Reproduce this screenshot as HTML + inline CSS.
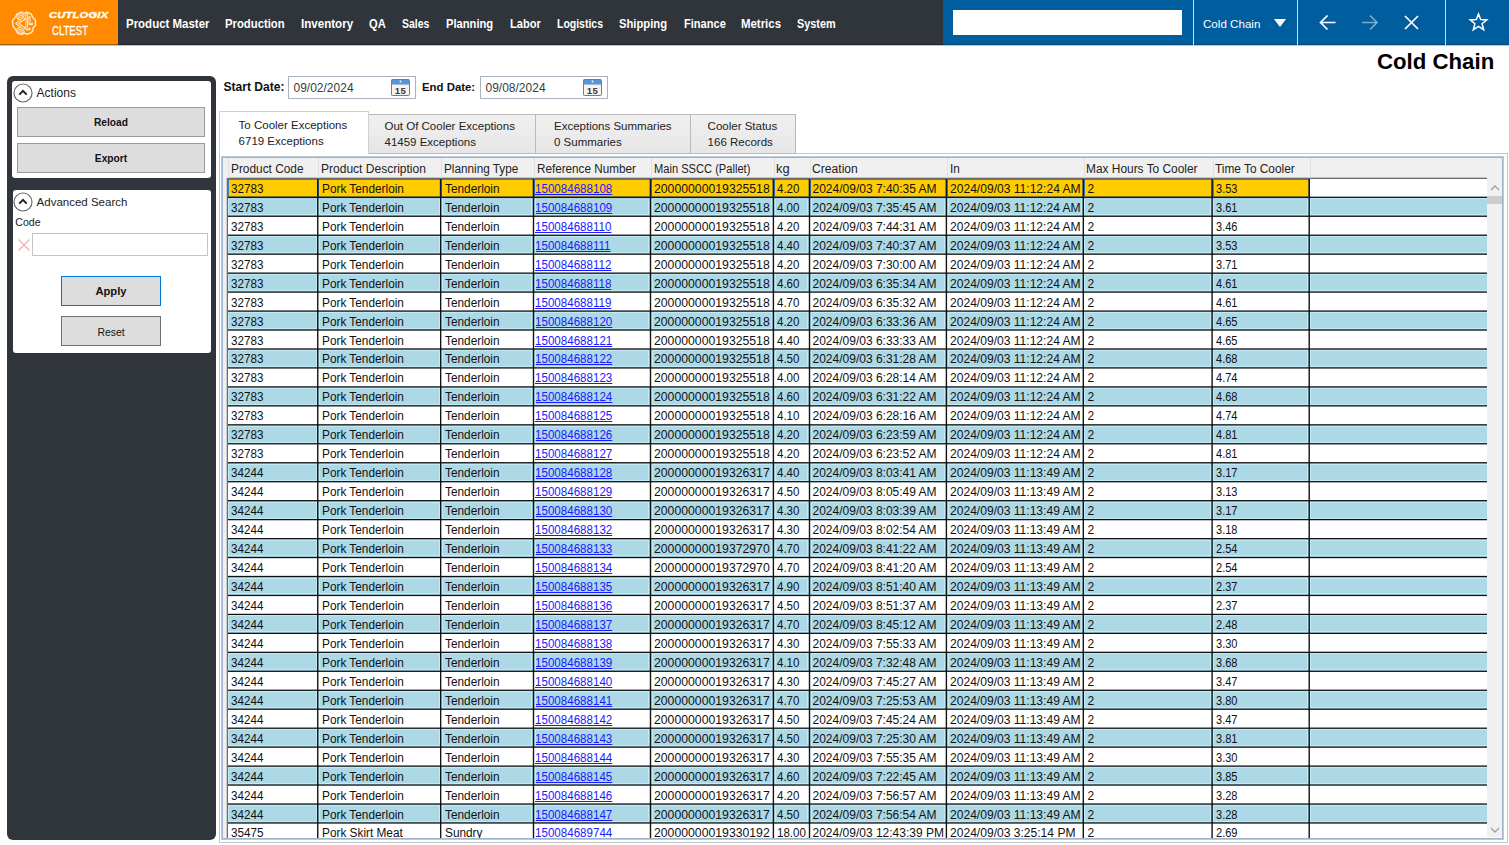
<!DOCTYPE html><html><head><meta charset="utf-8"><style>
html,body{margin:0;padding:0;}
body{width:1509px;height:845px;overflow:hidden;position:relative;background:#fff;font-family:"Liberation Sans", sans-serif;}
.a{position:absolute;box-sizing:border-box;}
.t{position:absolute;white-space:nowrap;line-height:1;font-family:"Liberation Sans", sans-serif;}
</style></head><body>
<div class="a" style="left:0;top:0;width:118px;height:45px;background:#ff8a00;border-bottom:1px solid #9a5a10"></div>
<div class="a" style="left:118px;top:0;width:825px;height:45px;background:#30353b;border-bottom:1px solid #1d242a"></div>
<div class="a" style="left:943px;top:0;width:566px;height:45px;background:#005e9f;border-bottom:1px solid #004a80"></div>
<div class="a" style="left:0;top:45px;width:1509px;height:1px;background:#b9c9d8"></div>
<svg class="a" style="left:11px;top:10px" width="26" height="26" viewBox="0 0 26 26" fill="none" stroke-linejoin="round" stroke-linecap="round">
<path d="M4.8 6.4 L5.8 4.2 L10.2 1.9 L13.1 3.1 L16 2.2 L20.4 4.2 L21.7 7.3 L24.3 9.9 L24.6 15.3 L22 17.9 L21.7 21.1 L18.8 23.6 L15.7 24.3 L13.4 23 L10.5 24.6 L6.4 23 L4.8 19.8 L1.9 16 L1.6 10.5 L3.2 8.6 Z" stroke="#ffe6c8" stroke-width="1.5"/>
<g stroke="#ffe6c8"><path d="M12.2 5.4 Q8.4 3.4 6.9 5.9 Q6.2 8.2 9 8.6 L12.8 9 L5.9 13.4 L12.8 17.8 L9 18.2 Q6.2 18.6 6.9 20.9 Q8.4 23.4 12.2 21.4" stroke-width="3.0"/><path d="M15.7 3 L15.7 19.2 L18.6 19" stroke-width="2.6"/><path d="M18.5 7.2 L18.5 14 L21 14" stroke-width="2.3"/></g>
<g stroke="#ff8a00"><path d="M12.2 5.4 Q8.4 3.4 6.9 5.9 Q6.2 8.2 9 8.6 L12.8 9 L5.9 13.4 L12.8 17.8 L9 18.2 Q6.2 18.6 6.9 20.9 Q8.4 23.4 12.2 21.4" stroke-width="0.9"/><path d="M15.7 4.2 L15.7 18.2 L17.8 18.1" stroke-width="0.7"/><path d="M18.5 8.2 L18.5 13 L20 13" stroke-width="0.6"/></g>
</svg>
<div class="t" style="left:48.6px;top:10.47px;font-size:9.6px;font-weight:700;color:#fff;transform:scaleX(1.16);transform-origin:0 0;font-style:italic;letter-spacing:0.2px;-webkit-text-stroke:0.35px #fff;">CUTLOGIX</div>
<div class="t" style="left:52.4px;top:24.53px;font-size:12.6px;font-weight:400;color:#fff;transform:scaleX(0.76);transform-origin:0 0;-webkit-text-stroke:0.3px #fff;">CLTEST</div>
<div class="t" style="left:125.5px;top:16.60px;font-size:13px;font-weight:700;color:#fff;transform:scaleX(0.8823);transform-origin:0 0;">Product Master</div>
<div class="t" style="left:225px;top:16.60px;font-size:13px;font-weight:700;color:#fff;transform:scaleX(0.8701);transform-origin:0 0;">Production</div>
<div class="t" style="left:300.9px;top:16.60px;font-size:13px;font-weight:700;color:#fff;transform:scaleX(0.8904);transform-origin:0 0;">Inventory</div>
<div class="t" style="left:369px;top:16.60px;font-size:13px;font-weight:700;color:#fff;transform:scaleX(0.8564);transform-origin:0 0;">QA</div>
<div class="t" style="left:402.2px;top:16.60px;font-size:13px;font-weight:700;color:#fff;transform:scaleX(0.8063);transform-origin:0 0;">Sales</div>
<div class="t" style="left:445.8px;top:16.60px;font-size:13px;font-weight:700;color:#fff;transform:scaleX(0.8599);transform-origin:0 0;">Planning</div>
<div class="t" style="left:509.5px;top:16.60px;font-size:13px;font-weight:700;color:#fff;transform:scaleX(0.8526);transform-origin:0 0;">Labor</div>
<div class="t" style="left:556.8px;top:16.60px;font-size:13px;font-weight:700;color:#fff;transform:scaleX(0.8059);transform-origin:0 0;">Logistics</div>
<div class="t" style="left:619.3px;top:16.60px;font-size:13px;font-weight:700;color:#fff;transform:scaleX(0.8650);transform-origin:0 0;">Shipping</div>
<div class="t" style="left:683.6px;top:16.60px;font-size:13px;font-weight:700;color:#fff;transform:scaleX(0.8509);transform-origin:0 0;">Finance</div>
<div class="t" style="left:741.2px;top:16.60px;font-size:13px;font-weight:700;color:#fff;transform:scaleX(0.8785);transform-origin:0 0;">Metrics</div>
<div class="t" style="left:797px;top:16.60px;font-size:13px;font-weight:700;color:#fff;transform:scaleX(0.8368);transform-origin:0 0;">System</div>
<div class="a" style="left:953px;top:10px;width:229px;height:25px;background:#fff"></div>
<div class="a" style="left:1193px;top:0;width:1px;height:45px;background:#c7dced"></div>
<div class="a" style="left:1297px;top:0;width:1px;height:45px;background:#c7dced"></div>
<div class="a" style="left:1445px;top:0;width:1px;height:45px;background:#c7dced"></div>
<div class="t" style="left:1203px;top:17.98px;font-size:11.6px;font-weight:400;color:#fff;">Cold Chain</div>
<svg class="a" style="left:1273px;top:18px" width="14" height="10" viewBox="0 0 14 10"><path d="M1 1 L13 1 L7 9 Z" fill="#fff"/></svg>
<svg class="a" style="left:1318px;top:13px" width="20" height="19" viewBox="0 0 20 19" fill="none" stroke="#fff" stroke-width="1.7">
<path d="M2.5 9.5 L17.5 9.5 M9.5 2.5 L2.5 9.5 L9.5 16.5"/></svg>
<svg class="a" style="left:1360px;top:13px" width="20" height="19" viewBox="0 0 20 19" fill="none" stroke="#7fa9cf" stroke-width="1.7">
<path d="M2 9.5 L17 9.5 M10 2.5 L17 9.5 L10 16.5"/></svg>
<svg class="a" style="left:1403px;top:14px" width="17" height="17" viewBox="0 0 17 17" fill="none" stroke="#fff" stroke-width="1.7">
<path d="M2 2 L15 15 M15 2 L2 15"/></svg>
<svg class="a" style="left:1468px;top:12px" width="21" height="20" viewBox="0 0 21 20" fill="none" stroke="#fff" stroke-width="1.5" stroke-linejoin="miter">
<path d="M10.5 2 L12.7 7.6 L18.8 7.9 L14.1 11.7 L15.7 17.7 L10.5 14.3 L5.3 17.7 L6.9 11.7 L2.2 7.9 L8.3 7.6 Z"/></svg>
<div class="t" style="left:1377.3px;top:50.58px;font-size:22px;font-weight:700;color:#000;transform:scaleX(1.0094);transform-origin:0 0;">Cold Chain</div>
<div class="a" style="left:7px;top:76px;width:209px;height:764px;background:#30353b;border-radius:6px"></div>
<div class="a" style="left:12px;top:81px;width:199px;height:97px;background:#fff;border-radius:3px"></div>
<div class="a" style="left:13px;top:190px;width:198px;height:163px;background:#fff;border-radius:3px"></div>
<svg class="a" style="left:13px;top:82.5px" width="20" height="20" viewBox="0 0 20 20" fill="none">
<circle cx="10" cy="10" r="9" stroke="#6b6b6b" stroke-width="1.2"/>
<path d="M6.3 11.6 L10 7.9 L13.7 11.6" stroke="#222" stroke-width="2"/></svg>
<div class="t" style="left:36.6px;top:87.34px;font-size:12px;font-weight:400;color:#222;">Actions</div>
<div class="a" style="left:17px;top:107px;width:188px;height:30px;background:#dddddd;border:1px solid #9a9a9a"></div>
<div class="t" style="left:17px;top:117.77px;width:188px;text-align:center;font-size:10.2px;font-weight:700;color:#111">Reload</div>
<div class="a" style="left:17px;top:143px;width:188px;height:30px;background:#dddddd;border:1px solid #9a9a9a"></div>
<div class="t" style="left:17px;top:153.57px;width:188px;text-align:center;font-size:10.2px;font-weight:700;color:#111">Export</div>
<svg class="a" style="left:13px;top:191.5px" width="20" height="20" viewBox="0 0 20 20" fill="none">
<circle cx="10" cy="10" r="9" stroke="#6b6b6b" stroke-width="1.2"/>
<path d="M6.3 11.6 L10 7.9 L13.7 11.6" stroke="#222" stroke-width="2"/></svg>
<div class="t" style="left:36.6px;top:196.87px;font-size:11.5px;font-weight:400;color:#222;">Advanced Search</div>
<div class="t" style="left:15.3px;top:217.23px;font-size:10.6px;font-weight:400;color:#222;">Code</div>
<svg class="a" style="left:17px;top:238px" width="14" height="14" viewBox="0 0 14 14" fill="none" stroke="#f4b0b0" stroke-width="1.3">
<path d="M1.5 1.5 L12.5 12.5 M12.5 1.5 L1.5 12.5"/></svg>
<div class="a" style="left:32px;top:233px;width:176px;height:23px;background:#fff;border:1px solid #c4c4c4"></div>
<div class="a" style="left:61px;top:276px;width:100px;height:30px;background:#dddddd;border:1px solid #0078d7"></div>
<div class="t" style="left:61px;top:286.22px;width:100px;text-align:center;font-size:11.2px;font-weight:700;color:#111">Apply</div>
<div class="a" style="left:61px;top:316px;width:100px;height:30px;background:#dddddd;border:1px solid #707070"></div>
<div class="t" style="left:61px;top:328.00px;width:100px;text-align:center;font-size:10.4px;font-weight:400;color:#111">Reset</div>
<div class="t" style="left:223.4px;top:81.16px;font-size:12.1px;font-weight:700;color:#111;">Start Date:</div>
<div class="t" style="left:422px;top:81.75px;font-size:11.4px;font-weight:700;color:#111;">End Date:</div>
<div class="a" style="left:288px;top:76px;width:128px;height:23px;background:#fff;border:1px solid #a9b3bd"></div>
<div class="t" style="left:293.5px;top:82.24px;font-size:12px;font-weight:400;color:#3a3a3a;">09/02/2024</div>
<svg class="a" style="left:391px;top:79px" width="19" height="17" viewBox="0 0 19 17">
<rect x="0.5" y="0.5" width="18" height="16" rx="0.8" fill="#f2f4f6" stroke="#7a7a7a"/>
<rect x="1" y="1" width="17" height="3.6" fill="#5095d8"/>
<rect x="1" y="4.6" width="17" height="0.8" fill="#4a5a6a"/>
<circle cx="9.5" cy="2.6" r="1" fill="#fff"/>
<text x="9.6" y="14.6" text-anchor="middle" font-family="Liberation Sans" font-size="9.6" font-weight="700" fill="#3c3c3c" letter-spacing="0.6">15</text></svg>
<div class="a" style="left:480px;top:76px;width:128px;height:23px;background:#fff;border:1px solid #a9b3bd"></div>
<div class="t" style="left:485.5px;top:82.24px;font-size:12px;font-weight:400;color:#3a3a3a;">09/08/2024</div>
<svg class="a" style="left:583px;top:79px" width="19" height="17" viewBox="0 0 19 17">
<rect x="0.5" y="0.5" width="18" height="16" rx="0.8" fill="#f2f4f6" stroke="#7a7a7a"/>
<rect x="1" y="1" width="17" height="3.6" fill="#5095d8"/>
<rect x="1" y="4.6" width="17" height="0.8" fill="#4a5a6a"/>
<circle cx="9.5" cy="2.6" r="1" fill="#fff"/>
<text x="9.6" y="14.6" text-anchor="middle" font-family="Liberation Sans" font-size="9.6" font-weight="700" fill="#3c3c3c" letter-spacing="0.6">15</text></svg>
<div class="a" style="left:219px;top:153px;width:1289px;height:690px;border:1px solid #c6c6c6;background:#fff"></div>
<div class="a" style="left:368px;top:114px;width:168px;height:40px;background:linear-gradient(#f0f0f0,#e6e6e6);border:1px solid #b9b9b9"></div>
<div class="t" style="left:384.5px;top:121.07px;font-size:11.5px;font-weight:400;color:#222;z-index:3;">Out Of Cooler Exceptions</div>
<div class="t" style="left:384.5px;top:137.07px;font-size:11.5px;font-weight:400;color:#222;z-index:3;">41459 Exceptions</div>
<div class="a" style="left:535px;top:114px;width:156px;height:40px;background:linear-gradient(#f0f0f0,#e6e6e6);border:1px solid #b9b9b9"></div>
<div class="t" style="left:554px;top:121.07px;font-size:11.5px;font-weight:400;color:#222;z-index:3;">Exceptions Summaries</div>
<div class="t" style="left:554px;top:137.07px;font-size:11.5px;font-weight:400;color:#222;z-index:3;">0 Summaries</div>
<div class="a" style="left:690px;top:114px;width:106px;height:40px;background:linear-gradient(#f0f0f0,#e6e6e6);border:1px solid #b9b9b9"></div>
<div class="t" style="left:707.6px;top:121.07px;font-size:11.5px;font-weight:400;color:#222;z-index:3;">Cooler Status</div>
<div class="t" style="left:707.6px;top:137.07px;font-size:11.5px;font-weight:400;color:#222;z-index:3;">166 Records</div>
<div class="a" style="left:219px;top:111px;width:150px;height:43px;background:#fff;border:1px solid #d0d0d0;border-bottom:none;z-index:2"></div>
<div class="t" style="left:238.6px;top:119.77px;font-size:11.5px;font-weight:400;color:#222;z-index:3;">To Cooler Exceptions</div>
<div class="t" style="left:238.6px;top:135.77px;font-size:11.5px;font-weight:400;color:#222;z-index:3;">6719 Exceptions</div>
<div class="a" style="left:221px;top:156px;width:1283px;height:684px;border:1px solid #b9cadb;box-shadow:inset 0 0 0 1px #9db4cc;background:#fff"></div>
<div class="a" style="left:223px;top:158px;width:1279px;height:21px;background:#f0f0f0"></div>
<div class="a" style="left:228px;top:177px;width:1259px;height:1px;background:rgba(0,0,0,0.18)"></div>
<div class="a" style="left:228px;top:178px;width:1259px;height:1px;background:#6c6c6c"></div>
<div class="a" style="left:228px;top:158px;width:1px;height:20px;background:#e0e0e0"></div>
<div class="a" style="left:318px;top:158px;width:1px;height:20px;background:#e0e0e0"></div>
<div class="a" style="left:441px;top:158px;width:1px;height:20px;background:#e0e0e0"></div>
<div class="a" style="left:534px;top:158px;width:1px;height:20px;background:#e0e0e0"></div>
<div class="a" style="left:651px;top:158px;width:1px;height:20px;background:#e0e0e0"></div>
<div class="a" style="left:774px;top:158px;width:1px;height:20px;background:#e0e0e0"></div>
<div class="a" style="left:810px;top:158px;width:1px;height:20px;background:#e0e0e0"></div>
<div class="a" style="left:947px;top:158px;width:1px;height:20px;background:#e0e0e0"></div>
<div class="a" style="left:1084px;top:158px;width:1px;height:20px;background:#e0e0e0"></div>
<div class="a" style="left:1213px;top:158px;width:1px;height:20px;background:#e0e0e0"></div>
<div class="a" style="left:1310px;top:158px;width:1px;height:20px;background:#e0e0e0"></div>
<div class="t" style="left:231.2px;top:162.74px;font-size:12px;font-weight:400;color:#222;transform:scaleX(0.9879);transform-origin:0 0;">Product Code</div>
<div class="t" style="left:321.2px;top:162.74px;font-size:12px;font-weight:400;color:#222;transform:scaleX(1.0017);transform-origin:0 0;">Product Description</div>
<div class="t" style="left:443.8px;top:162.74px;font-size:12px;font-weight:400;color:#222;transform:scaleX(0.9796);transform-origin:0 0;">Planning Type</div>
<div class="t" style="left:536.9000000000001px;top:162.74px;font-size:12px;font-weight:400;color:#222;transform:scaleX(0.9744);transform-origin:0 0;">Reference Number</div>
<div class="t" style="left:653.5px;top:162.74px;font-size:12px;font-weight:400;color:#222;transform:scaleX(0.9266);transform-origin:0 0;">Main SSCC (Pallet)</div>
<div class="t" style="left:776.4000000000001px;top:162.74px;font-size:12px;font-weight:400;color:#222;transform:scaleX(1.0719);transform-origin:0 0;">kg</div>
<div class="t" style="left:811.5px;top:162.74px;font-size:12px;font-weight:400;color:#222;transform:scaleX(1.0097);transform-origin:0 0;">Creation</div>
<div class="t" style="left:949.5px;top:162.74px;font-size:12px;font-weight:400;color:#222;transform:scaleX(0.9885);transform-origin:0 0;">In</div>
<div class="t" style="left:1086.1000000000001px;top:162.74px;font-size:12px;font-weight:400;color:#222;transform:scaleX(0.9920);transform-origin:0 0;">Max Hours To Cooler</div>
<div class="t" style="left:1215.1000000000001px;top:162.74px;font-size:12px;font-weight:400;color:#222;transform:scaleX(0.9876);transform-origin:0 0;">Time To Cooler</div>
<div class="a" style="left:223px;top:178px;width:4px;height:660px;background:#f0f0f0"></div>
<div class="a" style="left:228px;top:179px;width:1082px;height:18px;background:#ffcc00"></div>
<div class="a" style="left:1310px;top:179px;width:177px;height:18px;background:#ffffff"></div>
<div class="t" style="left:228px;top:179px;width:89px;height:19px;overflow:hidden"><div class="t" style="left:2.8px;top:3.84px;font-size:12px;color:#111;transform:scaleX(0.97);transform-origin:0 0;">32783</div></div>
<div class="t" style="left:318px;top:179px;width:122px;height:19px;overflow:hidden"><div class="t" style="left:3.5px;top:3.84px;font-size:12px;color:#111;transform:scaleX(0.985);transform-origin:0 0;">Pork Tenderloin</div></div>
<div class="t" style="left:441px;top:179px;width:92px;height:19px;overflow:hidden"><div class="t" style="left:3.5px;top:3.84px;font-size:12px;color:#111;transform:scaleX(0.985);transform-origin:0 0;">Tenderloin</div></div>
<div class="t" style="left:534px;top:179px;width:116px;height:19px;overflow:hidden"><div class="t" style="left:0.8px;top:3.84px;font-size:12px;color:#1a1aff;text-decoration:underline;transform:scaleX(0.965);transform-origin:0 0;">150084688108</div></div>
<div class="t" style="left:651px;top:179px;width:122px;height:19px;overflow:hidden"><div class="t" style="left:2.5px;top:3.84px;font-size:12px;color:#111;transform:scaleX(1.02);transform-origin:0 0;">20000000019325518</div></div>
<div class="t" style="left:774px;top:179px;width:35px;height:19px;overflow:hidden"><div class="t" style="left:2.5px;top:3.84px;font-size:12px;color:#111;transform:scaleX(0.96);transform-origin:0 0;">4.20</div></div>
<div class="t" style="left:810px;top:179px;width:136px;height:19px;overflow:hidden"><div class="t" style="left:2.5px;top:3.84px;font-size:12px;color:#111;">2024/09/03 7:40:35 AM</div></div>
<div class="t" style="left:947px;top:179px;width:136px;height:19px;overflow:hidden"><div class="t" style="left:2.5px;top:3.84px;font-size:12px;color:#111;transform:scaleX(1.006);transform-origin:0 0;">2024/09/03 11:12:24 AM</div></div>
<div class="t" style="left:1084px;top:179px;width:128px;height:19px;overflow:hidden"><div class="t" style="left:3.5px;top:3.84px;font-size:12px;color:#111;">2</div></div>
<div class="t" style="left:1213px;top:179px;width:96px;height:19px;overflow:hidden"><div class="t" style="left:2.5px;top:3.84px;font-size:12px;color:#111;transform:scaleX(0.92);transform-origin:0 0;">3.53</div></div>
<div class="a" style="left:228px;top:197px;width:1082px;height:19px;background:#add8e6"></div>
<div class="a" style="left:1310px;top:197px;width:177px;height:19px;background:#add8e6"></div>
<div class="t" style="left:228px;top:197px;width:89px;height:19px;overflow:hidden"><div class="t" style="left:2.8px;top:4.80px;font-size:12px;color:#111;transform:scaleX(0.97);transform-origin:0 0;">32783</div></div>
<div class="t" style="left:318px;top:197px;width:122px;height:19px;overflow:hidden"><div class="t" style="left:3.5px;top:4.80px;font-size:12px;color:#111;transform:scaleX(0.985);transform-origin:0 0;">Pork Tenderloin</div></div>
<div class="t" style="left:441px;top:197px;width:92px;height:19px;overflow:hidden"><div class="t" style="left:3.5px;top:4.80px;font-size:12px;color:#111;transform:scaleX(0.985);transform-origin:0 0;">Tenderloin</div></div>
<div class="t" style="left:534px;top:197px;width:116px;height:19px;overflow:hidden"><div class="t" style="left:0.8px;top:4.80px;font-size:12px;color:#1a1aff;text-decoration:underline;transform:scaleX(0.965);transform-origin:0 0;">150084688109</div></div>
<div class="t" style="left:651px;top:197px;width:122px;height:19px;overflow:hidden"><div class="t" style="left:2.5px;top:4.80px;font-size:12px;color:#111;transform:scaleX(1.02);transform-origin:0 0;">20000000019325518</div></div>
<div class="t" style="left:774px;top:197px;width:35px;height:19px;overflow:hidden"><div class="t" style="left:2.5px;top:4.80px;font-size:12px;color:#111;transform:scaleX(0.96);transform-origin:0 0;">4.00</div></div>
<div class="t" style="left:810px;top:197px;width:136px;height:19px;overflow:hidden"><div class="t" style="left:2.5px;top:4.80px;font-size:12px;color:#111;">2024/09/03 7:35:45 AM</div></div>
<div class="t" style="left:947px;top:197px;width:136px;height:19px;overflow:hidden"><div class="t" style="left:2.5px;top:4.80px;font-size:12px;color:#111;transform:scaleX(1.006);transform-origin:0 0;">2024/09/03 11:12:24 AM</div></div>
<div class="t" style="left:1084px;top:197px;width:128px;height:19px;overflow:hidden"><div class="t" style="left:3.5px;top:4.80px;font-size:12px;color:#111;">2</div></div>
<div class="t" style="left:1213px;top:197px;width:96px;height:19px;overflow:hidden"><div class="t" style="left:2.5px;top:4.80px;font-size:12px;color:#111;transform:scaleX(0.92);transform-origin:0 0;">3.61</div></div>
<div class="a" style="left:228px;top:216px;width:1082px;height:19px;background:#ffffff"></div>
<div class="a" style="left:1310px;top:216px;width:177px;height:19px;background:#ffffff"></div>
<div class="t" style="left:228px;top:216px;width:89px;height:19px;overflow:hidden"><div class="t" style="left:2.8px;top:4.76px;font-size:12px;color:#111;transform:scaleX(0.97);transform-origin:0 0;">32783</div></div>
<div class="t" style="left:318px;top:216px;width:122px;height:19px;overflow:hidden"><div class="t" style="left:3.5px;top:4.76px;font-size:12px;color:#111;transform:scaleX(0.985);transform-origin:0 0;">Pork Tenderloin</div></div>
<div class="t" style="left:441px;top:216px;width:92px;height:19px;overflow:hidden"><div class="t" style="left:3.5px;top:4.76px;font-size:12px;color:#111;transform:scaleX(0.985);transform-origin:0 0;">Tenderloin</div></div>
<div class="t" style="left:534px;top:216px;width:116px;height:19px;overflow:hidden"><div class="t" style="left:0.8px;top:4.76px;font-size:12px;color:#1a1aff;text-decoration:underline;transform:scaleX(0.965);transform-origin:0 0;">150084688110</div></div>
<div class="t" style="left:651px;top:216px;width:122px;height:19px;overflow:hidden"><div class="t" style="left:2.5px;top:4.76px;font-size:12px;color:#111;transform:scaleX(1.02);transform-origin:0 0;">20000000019325518</div></div>
<div class="t" style="left:774px;top:216px;width:35px;height:19px;overflow:hidden"><div class="t" style="left:2.5px;top:4.76px;font-size:12px;color:#111;transform:scaleX(0.96);transform-origin:0 0;">4.20</div></div>
<div class="t" style="left:810px;top:216px;width:136px;height:19px;overflow:hidden"><div class="t" style="left:2.5px;top:4.76px;font-size:12px;color:#111;">2024/09/03 7:44:31 AM</div></div>
<div class="t" style="left:947px;top:216px;width:136px;height:19px;overflow:hidden"><div class="t" style="left:2.5px;top:4.76px;font-size:12px;color:#111;transform:scaleX(1.006);transform-origin:0 0;">2024/09/03 11:12:24 AM</div></div>
<div class="t" style="left:1084px;top:216px;width:128px;height:19px;overflow:hidden"><div class="t" style="left:3.5px;top:4.76px;font-size:12px;color:#111;">2</div></div>
<div class="t" style="left:1213px;top:216px;width:96px;height:19px;overflow:hidden"><div class="t" style="left:2.5px;top:4.76px;font-size:12px;color:#111;transform:scaleX(0.92);transform-origin:0 0;">3.46</div></div>
<div class="a" style="left:228px;top:235px;width:1082px;height:19px;background:#add8e6"></div>
<div class="a" style="left:1310px;top:235px;width:177px;height:19px;background:#add8e6"></div>
<div class="t" style="left:228px;top:235px;width:89px;height:19px;overflow:hidden"><div class="t" style="left:2.8px;top:4.72px;font-size:12px;color:#111;transform:scaleX(0.97);transform-origin:0 0;">32783</div></div>
<div class="t" style="left:318px;top:235px;width:122px;height:19px;overflow:hidden"><div class="t" style="left:3.5px;top:4.72px;font-size:12px;color:#111;transform:scaleX(0.985);transform-origin:0 0;">Pork Tenderloin</div></div>
<div class="t" style="left:441px;top:235px;width:92px;height:19px;overflow:hidden"><div class="t" style="left:3.5px;top:4.72px;font-size:12px;color:#111;transform:scaleX(0.985);transform-origin:0 0;">Tenderloin</div></div>
<div class="t" style="left:534px;top:235px;width:116px;height:19px;overflow:hidden"><div class="t" style="left:0.8px;top:4.72px;font-size:12px;color:#1a1aff;text-decoration:underline;transform:scaleX(0.965);transform-origin:0 0;">150084688111</div></div>
<div class="t" style="left:651px;top:235px;width:122px;height:19px;overflow:hidden"><div class="t" style="left:2.5px;top:4.72px;font-size:12px;color:#111;transform:scaleX(1.02);transform-origin:0 0;">20000000019325518</div></div>
<div class="t" style="left:774px;top:235px;width:35px;height:19px;overflow:hidden"><div class="t" style="left:2.5px;top:4.72px;font-size:12px;color:#111;transform:scaleX(0.96);transform-origin:0 0;">4.40</div></div>
<div class="t" style="left:810px;top:235px;width:136px;height:19px;overflow:hidden"><div class="t" style="left:2.5px;top:4.72px;font-size:12px;color:#111;">2024/09/03 7:40:37 AM</div></div>
<div class="t" style="left:947px;top:235px;width:136px;height:19px;overflow:hidden"><div class="t" style="left:2.5px;top:4.72px;font-size:12px;color:#111;transform:scaleX(1.006);transform-origin:0 0;">2024/09/03 11:12:24 AM</div></div>
<div class="t" style="left:1084px;top:235px;width:128px;height:19px;overflow:hidden"><div class="t" style="left:3.5px;top:4.72px;font-size:12px;color:#111;">2</div></div>
<div class="t" style="left:1213px;top:235px;width:96px;height:19px;overflow:hidden"><div class="t" style="left:2.5px;top:4.72px;font-size:12px;color:#111;transform:scaleX(0.92);transform-origin:0 0;">3.53</div></div>
<div class="a" style="left:228px;top:254px;width:1082px;height:19px;background:#ffffff"></div>
<div class="a" style="left:1310px;top:254px;width:177px;height:19px;background:#ffffff"></div>
<div class="t" style="left:228px;top:254px;width:89px;height:19px;overflow:hidden"><div class="t" style="left:2.8px;top:4.68px;font-size:12px;color:#111;transform:scaleX(0.97);transform-origin:0 0;">32783</div></div>
<div class="t" style="left:318px;top:254px;width:122px;height:19px;overflow:hidden"><div class="t" style="left:3.5px;top:4.68px;font-size:12px;color:#111;transform:scaleX(0.985);transform-origin:0 0;">Pork Tenderloin</div></div>
<div class="t" style="left:441px;top:254px;width:92px;height:19px;overflow:hidden"><div class="t" style="left:3.5px;top:4.68px;font-size:12px;color:#111;transform:scaleX(0.985);transform-origin:0 0;">Tenderloin</div></div>
<div class="t" style="left:534px;top:254px;width:116px;height:19px;overflow:hidden"><div class="t" style="left:0.8px;top:4.68px;font-size:12px;color:#1a1aff;text-decoration:underline;transform:scaleX(0.965);transform-origin:0 0;">150084688112</div></div>
<div class="t" style="left:651px;top:254px;width:122px;height:19px;overflow:hidden"><div class="t" style="left:2.5px;top:4.68px;font-size:12px;color:#111;transform:scaleX(1.02);transform-origin:0 0;">20000000019325518</div></div>
<div class="t" style="left:774px;top:254px;width:35px;height:19px;overflow:hidden"><div class="t" style="left:2.5px;top:4.68px;font-size:12px;color:#111;transform:scaleX(0.96);transform-origin:0 0;">4.20</div></div>
<div class="t" style="left:810px;top:254px;width:136px;height:19px;overflow:hidden"><div class="t" style="left:2.5px;top:4.68px;font-size:12px;color:#111;">2024/09/03 7:30:00 AM</div></div>
<div class="t" style="left:947px;top:254px;width:136px;height:19px;overflow:hidden"><div class="t" style="left:2.5px;top:4.68px;font-size:12px;color:#111;transform:scaleX(1.006);transform-origin:0 0;">2024/09/03 11:12:24 AM</div></div>
<div class="t" style="left:1084px;top:254px;width:128px;height:19px;overflow:hidden"><div class="t" style="left:3.5px;top:4.68px;font-size:12px;color:#111;">2</div></div>
<div class="t" style="left:1213px;top:254px;width:96px;height:19px;overflow:hidden"><div class="t" style="left:2.5px;top:4.68px;font-size:12px;color:#111;transform:scaleX(0.92);transform-origin:0 0;">3.71</div></div>
<div class="a" style="left:228px;top:273px;width:1082px;height:19px;background:#add8e6"></div>
<div class="a" style="left:1310px;top:273px;width:177px;height:19px;background:#add8e6"></div>
<div class="t" style="left:228px;top:273px;width:89px;height:19px;overflow:hidden"><div class="t" style="left:2.8px;top:4.64px;font-size:12px;color:#111;transform:scaleX(0.97);transform-origin:0 0;">32783</div></div>
<div class="t" style="left:318px;top:273px;width:122px;height:19px;overflow:hidden"><div class="t" style="left:3.5px;top:4.64px;font-size:12px;color:#111;transform:scaleX(0.985);transform-origin:0 0;">Pork Tenderloin</div></div>
<div class="t" style="left:441px;top:273px;width:92px;height:19px;overflow:hidden"><div class="t" style="left:3.5px;top:4.64px;font-size:12px;color:#111;transform:scaleX(0.985);transform-origin:0 0;">Tenderloin</div></div>
<div class="t" style="left:534px;top:273px;width:116px;height:19px;overflow:hidden"><div class="t" style="left:0.8px;top:4.64px;font-size:12px;color:#1a1aff;text-decoration:underline;transform:scaleX(0.965);transform-origin:0 0;">150084688118</div></div>
<div class="t" style="left:651px;top:273px;width:122px;height:19px;overflow:hidden"><div class="t" style="left:2.5px;top:4.64px;font-size:12px;color:#111;transform:scaleX(1.02);transform-origin:0 0;">20000000019325518</div></div>
<div class="t" style="left:774px;top:273px;width:35px;height:19px;overflow:hidden"><div class="t" style="left:2.5px;top:4.64px;font-size:12px;color:#111;transform:scaleX(0.96);transform-origin:0 0;">4.60</div></div>
<div class="t" style="left:810px;top:273px;width:136px;height:19px;overflow:hidden"><div class="t" style="left:2.5px;top:4.64px;font-size:12px;color:#111;">2024/09/03 6:35:34 AM</div></div>
<div class="t" style="left:947px;top:273px;width:136px;height:19px;overflow:hidden"><div class="t" style="left:2.5px;top:4.64px;font-size:12px;color:#111;transform:scaleX(1.006);transform-origin:0 0;">2024/09/03 11:12:24 AM</div></div>
<div class="t" style="left:1084px;top:273px;width:128px;height:19px;overflow:hidden"><div class="t" style="left:3.5px;top:4.64px;font-size:12px;color:#111;">2</div></div>
<div class="t" style="left:1213px;top:273px;width:96px;height:19px;overflow:hidden"><div class="t" style="left:2.5px;top:4.64px;font-size:12px;color:#111;transform:scaleX(0.92);transform-origin:0 0;">4.61</div></div>
<div class="a" style="left:228px;top:292px;width:1082px;height:19px;background:#ffffff"></div>
<div class="a" style="left:1310px;top:292px;width:177px;height:19px;background:#ffffff"></div>
<div class="t" style="left:228px;top:292px;width:89px;height:19px;overflow:hidden"><div class="t" style="left:2.8px;top:4.60px;font-size:12px;color:#111;transform:scaleX(0.97);transform-origin:0 0;">32783</div></div>
<div class="t" style="left:318px;top:292px;width:122px;height:19px;overflow:hidden"><div class="t" style="left:3.5px;top:4.60px;font-size:12px;color:#111;transform:scaleX(0.985);transform-origin:0 0;">Pork Tenderloin</div></div>
<div class="t" style="left:441px;top:292px;width:92px;height:19px;overflow:hidden"><div class="t" style="left:3.5px;top:4.60px;font-size:12px;color:#111;transform:scaleX(0.985);transform-origin:0 0;">Tenderloin</div></div>
<div class="t" style="left:534px;top:292px;width:116px;height:19px;overflow:hidden"><div class="t" style="left:0.8px;top:4.60px;font-size:12px;color:#1a1aff;text-decoration:underline;transform:scaleX(0.965);transform-origin:0 0;">150084688119</div></div>
<div class="t" style="left:651px;top:292px;width:122px;height:19px;overflow:hidden"><div class="t" style="left:2.5px;top:4.60px;font-size:12px;color:#111;transform:scaleX(1.02);transform-origin:0 0;">20000000019325518</div></div>
<div class="t" style="left:774px;top:292px;width:35px;height:19px;overflow:hidden"><div class="t" style="left:2.5px;top:4.60px;font-size:12px;color:#111;transform:scaleX(0.96);transform-origin:0 0;">4.70</div></div>
<div class="t" style="left:810px;top:292px;width:136px;height:19px;overflow:hidden"><div class="t" style="left:2.5px;top:4.60px;font-size:12px;color:#111;">2024/09/03 6:35:32 AM</div></div>
<div class="t" style="left:947px;top:292px;width:136px;height:19px;overflow:hidden"><div class="t" style="left:2.5px;top:4.60px;font-size:12px;color:#111;transform:scaleX(1.006);transform-origin:0 0;">2024/09/03 11:12:24 AM</div></div>
<div class="t" style="left:1084px;top:292px;width:128px;height:19px;overflow:hidden"><div class="t" style="left:3.5px;top:4.60px;font-size:12px;color:#111;">2</div></div>
<div class="t" style="left:1213px;top:292px;width:96px;height:19px;overflow:hidden"><div class="t" style="left:2.5px;top:4.60px;font-size:12px;color:#111;transform:scaleX(0.92);transform-origin:0 0;">4.61</div></div>
<div class="a" style="left:228px;top:311px;width:1082px;height:19px;background:#add8e6"></div>
<div class="a" style="left:1310px;top:311px;width:177px;height:19px;background:#add8e6"></div>
<div class="t" style="left:228px;top:311px;width:89px;height:19px;overflow:hidden"><div class="t" style="left:2.8px;top:4.56px;font-size:12px;color:#111;transform:scaleX(0.97);transform-origin:0 0;">32783</div></div>
<div class="t" style="left:318px;top:311px;width:122px;height:19px;overflow:hidden"><div class="t" style="left:3.5px;top:4.56px;font-size:12px;color:#111;transform:scaleX(0.985);transform-origin:0 0;">Pork Tenderloin</div></div>
<div class="t" style="left:441px;top:311px;width:92px;height:19px;overflow:hidden"><div class="t" style="left:3.5px;top:4.56px;font-size:12px;color:#111;transform:scaleX(0.985);transform-origin:0 0;">Tenderloin</div></div>
<div class="t" style="left:534px;top:311px;width:116px;height:19px;overflow:hidden"><div class="t" style="left:0.8px;top:4.56px;font-size:12px;color:#1a1aff;text-decoration:underline;transform:scaleX(0.965);transform-origin:0 0;">150084688120</div></div>
<div class="t" style="left:651px;top:311px;width:122px;height:19px;overflow:hidden"><div class="t" style="left:2.5px;top:4.56px;font-size:12px;color:#111;transform:scaleX(1.02);transform-origin:0 0;">20000000019325518</div></div>
<div class="t" style="left:774px;top:311px;width:35px;height:19px;overflow:hidden"><div class="t" style="left:2.5px;top:4.56px;font-size:12px;color:#111;transform:scaleX(0.96);transform-origin:0 0;">4.20</div></div>
<div class="t" style="left:810px;top:311px;width:136px;height:19px;overflow:hidden"><div class="t" style="left:2.5px;top:4.56px;font-size:12px;color:#111;">2024/09/03 6:33:36 AM</div></div>
<div class="t" style="left:947px;top:311px;width:136px;height:19px;overflow:hidden"><div class="t" style="left:2.5px;top:4.56px;font-size:12px;color:#111;transform:scaleX(1.006);transform-origin:0 0;">2024/09/03 11:12:24 AM</div></div>
<div class="t" style="left:1084px;top:311px;width:128px;height:19px;overflow:hidden"><div class="t" style="left:3.5px;top:4.56px;font-size:12px;color:#111;">2</div></div>
<div class="t" style="left:1213px;top:311px;width:96px;height:19px;overflow:hidden"><div class="t" style="left:2.5px;top:4.56px;font-size:12px;color:#111;transform:scaleX(0.92);transform-origin:0 0;">4.65</div></div>
<div class="a" style="left:228px;top:330px;width:1082px;height:19px;background:#ffffff"></div>
<div class="a" style="left:1310px;top:330px;width:177px;height:19px;background:#ffffff"></div>
<div class="t" style="left:228px;top:330px;width:89px;height:19px;overflow:hidden"><div class="t" style="left:2.8px;top:4.52px;font-size:12px;color:#111;transform:scaleX(0.97);transform-origin:0 0;">32783</div></div>
<div class="t" style="left:318px;top:330px;width:122px;height:19px;overflow:hidden"><div class="t" style="left:3.5px;top:4.52px;font-size:12px;color:#111;transform:scaleX(0.985);transform-origin:0 0;">Pork Tenderloin</div></div>
<div class="t" style="left:441px;top:330px;width:92px;height:19px;overflow:hidden"><div class="t" style="left:3.5px;top:4.52px;font-size:12px;color:#111;transform:scaleX(0.985);transform-origin:0 0;">Tenderloin</div></div>
<div class="t" style="left:534px;top:330px;width:116px;height:19px;overflow:hidden"><div class="t" style="left:0.8px;top:4.52px;font-size:12px;color:#1a1aff;text-decoration:underline;transform:scaleX(0.965);transform-origin:0 0;">150084688121</div></div>
<div class="t" style="left:651px;top:330px;width:122px;height:19px;overflow:hidden"><div class="t" style="left:2.5px;top:4.52px;font-size:12px;color:#111;transform:scaleX(1.02);transform-origin:0 0;">20000000019325518</div></div>
<div class="t" style="left:774px;top:330px;width:35px;height:19px;overflow:hidden"><div class="t" style="left:2.5px;top:4.52px;font-size:12px;color:#111;transform:scaleX(0.96);transform-origin:0 0;">4.40</div></div>
<div class="t" style="left:810px;top:330px;width:136px;height:19px;overflow:hidden"><div class="t" style="left:2.5px;top:4.52px;font-size:12px;color:#111;">2024/09/03 6:33:33 AM</div></div>
<div class="t" style="left:947px;top:330px;width:136px;height:19px;overflow:hidden"><div class="t" style="left:2.5px;top:4.52px;font-size:12px;color:#111;transform:scaleX(1.006);transform-origin:0 0;">2024/09/03 11:12:24 AM</div></div>
<div class="t" style="left:1084px;top:330px;width:128px;height:19px;overflow:hidden"><div class="t" style="left:3.5px;top:4.52px;font-size:12px;color:#111;">2</div></div>
<div class="t" style="left:1213px;top:330px;width:96px;height:19px;overflow:hidden"><div class="t" style="left:2.5px;top:4.52px;font-size:12px;color:#111;transform:scaleX(0.92);transform-origin:0 0;">4.65</div></div>
<div class="a" style="left:228px;top:349px;width:1082px;height:19px;background:#add8e6"></div>
<div class="a" style="left:1310px;top:349px;width:177px;height:19px;background:#add8e6"></div>
<div class="t" style="left:228px;top:349px;width:89px;height:19px;overflow:hidden"><div class="t" style="left:2.8px;top:4.48px;font-size:12px;color:#111;transform:scaleX(0.97);transform-origin:0 0;">32783</div></div>
<div class="t" style="left:318px;top:349px;width:122px;height:19px;overflow:hidden"><div class="t" style="left:3.5px;top:4.48px;font-size:12px;color:#111;transform:scaleX(0.985);transform-origin:0 0;">Pork Tenderloin</div></div>
<div class="t" style="left:441px;top:349px;width:92px;height:19px;overflow:hidden"><div class="t" style="left:3.5px;top:4.48px;font-size:12px;color:#111;transform:scaleX(0.985);transform-origin:0 0;">Tenderloin</div></div>
<div class="t" style="left:534px;top:349px;width:116px;height:19px;overflow:hidden"><div class="t" style="left:0.8px;top:4.48px;font-size:12px;color:#1a1aff;text-decoration:underline;transform:scaleX(0.965);transform-origin:0 0;">150084688122</div></div>
<div class="t" style="left:651px;top:349px;width:122px;height:19px;overflow:hidden"><div class="t" style="left:2.5px;top:4.48px;font-size:12px;color:#111;transform:scaleX(1.02);transform-origin:0 0;">20000000019325518</div></div>
<div class="t" style="left:774px;top:349px;width:35px;height:19px;overflow:hidden"><div class="t" style="left:2.5px;top:4.48px;font-size:12px;color:#111;transform:scaleX(0.96);transform-origin:0 0;">4.50</div></div>
<div class="t" style="left:810px;top:349px;width:136px;height:19px;overflow:hidden"><div class="t" style="left:2.5px;top:4.48px;font-size:12px;color:#111;">2024/09/03 6:31:28 AM</div></div>
<div class="t" style="left:947px;top:349px;width:136px;height:19px;overflow:hidden"><div class="t" style="left:2.5px;top:4.48px;font-size:12px;color:#111;transform:scaleX(1.006);transform-origin:0 0;">2024/09/03 11:12:24 AM</div></div>
<div class="t" style="left:1084px;top:349px;width:128px;height:19px;overflow:hidden"><div class="t" style="left:3.5px;top:4.48px;font-size:12px;color:#111;">2</div></div>
<div class="t" style="left:1213px;top:349px;width:96px;height:19px;overflow:hidden"><div class="t" style="left:2.5px;top:4.48px;font-size:12px;color:#111;transform:scaleX(0.92);transform-origin:0 0;">4.68</div></div>
<div class="a" style="left:228px;top:368px;width:1082px;height:19px;background:#ffffff"></div>
<div class="a" style="left:1310px;top:368px;width:177px;height:19px;background:#ffffff"></div>
<div class="t" style="left:228px;top:368px;width:89px;height:19px;overflow:hidden"><div class="t" style="left:2.8px;top:4.44px;font-size:12px;color:#111;transform:scaleX(0.97);transform-origin:0 0;">32783</div></div>
<div class="t" style="left:318px;top:368px;width:122px;height:19px;overflow:hidden"><div class="t" style="left:3.5px;top:4.44px;font-size:12px;color:#111;transform:scaleX(0.985);transform-origin:0 0;">Pork Tenderloin</div></div>
<div class="t" style="left:441px;top:368px;width:92px;height:19px;overflow:hidden"><div class="t" style="left:3.5px;top:4.44px;font-size:12px;color:#111;transform:scaleX(0.985);transform-origin:0 0;">Tenderloin</div></div>
<div class="t" style="left:534px;top:368px;width:116px;height:19px;overflow:hidden"><div class="t" style="left:0.8px;top:4.44px;font-size:12px;color:#1a1aff;text-decoration:underline;transform:scaleX(0.965);transform-origin:0 0;">150084688123</div></div>
<div class="t" style="left:651px;top:368px;width:122px;height:19px;overflow:hidden"><div class="t" style="left:2.5px;top:4.44px;font-size:12px;color:#111;transform:scaleX(1.02);transform-origin:0 0;">20000000019325518</div></div>
<div class="t" style="left:774px;top:368px;width:35px;height:19px;overflow:hidden"><div class="t" style="left:2.5px;top:4.44px;font-size:12px;color:#111;transform:scaleX(0.96);transform-origin:0 0;">4.00</div></div>
<div class="t" style="left:810px;top:368px;width:136px;height:19px;overflow:hidden"><div class="t" style="left:2.5px;top:4.44px;font-size:12px;color:#111;">2024/09/03 6:28:14 AM</div></div>
<div class="t" style="left:947px;top:368px;width:136px;height:19px;overflow:hidden"><div class="t" style="left:2.5px;top:4.44px;font-size:12px;color:#111;transform:scaleX(1.006);transform-origin:0 0;">2024/09/03 11:12:24 AM</div></div>
<div class="t" style="left:1084px;top:368px;width:128px;height:19px;overflow:hidden"><div class="t" style="left:3.5px;top:4.44px;font-size:12px;color:#111;">2</div></div>
<div class="t" style="left:1213px;top:368px;width:96px;height:19px;overflow:hidden"><div class="t" style="left:2.5px;top:4.44px;font-size:12px;color:#111;transform:scaleX(0.92);transform-origin:0 0;">4.74</div></div>
<div class="a" style="left:228px;top:387px;width:1082px;height:19px;background:#add8e6"></div>
<div class="a" style="left:1310px;top:387px;width:177px;height:19px;background:#add8e6"></div>
<div class="t" style="left:228px;top:387px;width:89px;height:19px;overflow:hidden"><div class="t" style="left:2.8px;top:4.40px;font-size:12px;color:#111;transform:scaleX(0.97);transform-origin:0 0;">32783</div></div>
<div class="t" style="left:318px;top:387px;width:122px;height:19px;overflow:hidden"><div class="t" style="left:3.5px;top:4.40px;font-size:12px;color:#111;transform:scaleX(0.985);transform-origin:0 0;">Pork Tenderloin</div></div>
<div class="t" style="left:441px;top:387px;width:92px;height:19px;overflow:hidden"><div class="t" style="left:3.5px;top:4.40px;font-size:12px;color:#111;transform:scaleX(0.985);transform-origin:0 0;">Tenderloin</div></div>
<div class="t" style="left:534px;top:387px;width:116px;height:19px;overflow:hidden"><div class="t" style="left:0.8px;top:4.40px;font-size:12px;color:#1a1aff;text-decoration:underline;transform:scaleX(0.965);transform-origin:0 0;">150084688124</div></div>
<div class="t" style="left:651px;top:387px;width:122px;height:19px;overflow:hidden"><div class="t" style="left:2.5px;top:4.40px;font-size:12px;color:#111;transform:scaleX(1.02);transform-origin:0 0;">20000000019325518</div></div>
<div class="t" style="left:774px;top:387px;width:35px;height:19px;overflow:hidden"><div class="t" style="left:2.5px;top:4.40px;font-size:12px;color:#111;transform:scaleX(0.96);transform-origin:0 0;">4.60</div></div>
<div class="t" style="left:810px;top:387px;width:136px;height:19px;overflow:hidden"><div class="t" style="left:2.5px;top:4.40px;font-size:12px;color:#111;">2024/09/03 6:31:22 AM</div></div>
<div class="t" style="left:947px;top:387px;width:136px;height:19px;overflow:hidden"><div class="t" style="left:2.5px;top:4.40px;font-size:12px;color:#111;transform:scaleX(1.006);transform-origin:0 0;">2024/09/03 11:12:24 AM</div></div>
<div class="t" style="left:1084px;top:387px;width:128px;height:19px;overflow:hidden"><div class="t" style="left:3.5px;top:4.40px;font-size:12px;color:#111;">2</div></div>
<div class="t" style="left:1213px;top:387px;width:96px;height:19px;overflow:hidden"><div class="t" style="left:2.5px;top:4.40px;font-size:12px;color:#111;transform:scaleX(0.92);transform-origin:0 0;">4.68</div></div>
<div class="a" style="left:228px;top:406px;width:1082px;height:19px;background:#ffffff"></div>
<div class="a" style="left:1310px;top:406px;width:177px;height:19px;background:#ffffff"></div>
<div class="t" style="left:228px;top:406px;width:89px;height:19px;overflow:hidden"><div class="t" style="left:2.8px;top:4.36px;font-size:12px;color:#111;transform:scaleX(0.97);transform-origin:0 0;">32783</div></div>
<div class="t" style="left:318px;top:406px;width:122px;height:19px;overflow:hidden"><div class="t" style="left:3.5px;top:4.36px;font-size:12px;color:#111;transform:scaleX(0.985);transform-origin:0 0;">Pork Tenderloin</div></div>
<div class="t" style="left:441px;top:406px;width:92px;height:19px;overflow:hidden"><div class="t" style="left:3.5px;top:4.36px;font-size:12px;color:#111;transform:scaleX(0.985);transform-origin:0 0;">Tenderloin</div></div>
<div class="t" style="left:534px;top:406px;width:116px;height:19px;overflow:hidden"><div class="t" style="left:0.8px;top:4.36px;font-size:12px;color:#1a1aff;text-decoration:underline;transform:scaleX(0.965);transform-origin:0 0;">150084688125</div></div>
<div class="t" style="left:651px;top:406px;width:122px;height:19px;overflow:hidden"><div class="t" style="left:2.5px;top:4.36px;font-size:12px;color:#111;transform:scaleX(1.02);transform-origin:0 0;">20000000019325518</div></div>
<div class="t" style="left:774px;top:406px;width:35px;height:19px;overflow:hidden"><div class="t" style="left:2.5px;top:4.36px;font-size:12px;color:#111;transform:scaleX(0.96);transform-origin:0 0;">4.10</div></div>
<div class="t" style="left:810px;top:406px;width:136px;height:19px;overflow:hidden"><div class="t" style="left:2.5px;top:4.36px;font-size:12px;color:#111;">2024/09/03 6:28:16 AM</div></div>
<div class="t" style="left:947px;top:406px;width:136px;height:19px;overflow:hidden"><div class="t" style="left:2.5px;top:4.36px;font-size:12px;color:#111;transform:scaleX(1.006);transform-origin:0 0;">2024/09/03 11:12:24 AM</div></div>
<div class="t" style="left:1084px;top:406px;width:128px;height:19px;overflow:hidden"><div class="t" style="left:3.5px;top:4.36px;font-size:12px;color:#111;">2</div></div>
<div class="t" style="left:1213px;top:406px;width:96px;height:19px;overflow:hidden"><div class="t" style="left:2.5px;top:4.36px;font-size:12px;color:#111;transform:scaleX(0.92);transform-origin:0 0;">4.74</div></div>
<div class="a" style="left:228px;top:425px;width:1082px;height:19px;background:#add8e6"></div>
<div class="a" style="left:1310px;top:425px;width:177px;height:19px;background:#add8e6"></div>
<div class="t" style="left:228px;top:425px;width:89px;height:19px;overflow:hidden"><div class="t" style="left:2.8px;top:4.32px;font-size:12px;color:#111;transform:scaleX(0.97);transform-origin:0 0;">32783</div></div>
<div class="t" style="left:318px;top:425px;width:122px;height:19px;overflow:hidden"><div class="t" style="left:3.5px;top:4.32px;font-size:12px;color:#111;transform:scaleX(0.985);transform-origin:0 0;">Pork Tenderloin</div></div>
<div class="t" style="left:441px;top:425px;width:92px;height:19px;overflow:hidden"><div class="t" style="left:3.5px;top:4.32px;font-size:12px;color:#111;transform:scaleX(0.985);transform-origin:0 0;">Tenderloin</div></div>
<div class="t" style="left:534px;top:425px;width:116px;height:19px;overflow:hidden"><div class="t" style="left:0.8px;top:4.32px;font-size:12px;color:#1a1aff;text-decoration:underline;transform:scaleX(0.965);transform-origin:0 0;">150084688126</div></div>
<div class="t" style="left:651px;top:425px;width:122px;height:19px;overflow:hidden"><div class="t" style="left:2.5px;top:4.32px;font-size:12px;color:#111;transform:scaleX(1.02);transform-origin:0 0;">20000000019325518</div></div>
<div class="t" style="left:774px;top:425px;width:35px;height:19px;overflow:hidden"><div class="t" style="left:2.5px;top:4.32px;font-size:12px;color:#111;transform:scaleX(0.96);transform-origin:0 0;">4.20</div></div>
<div class="t" style="left:810px;top:425px;width:136px;height:19px;overflow:hidden"><div class="t" style="left:2.5px;top:4.32px;font-size:12px;color:#111;">2024/09/03 6:23:59 AM</div></div>
<div class="t" style="left:947px;top:425px;width:136px;height:19px;overflow:hidden"><div class="t" style="left:2.5px;top:4.32px;font-size:12px;color:#111;transform:scaleX(1.006);transform-origin:0 0;">2024/09/03 11:12:24 AM</div></div>
<div class="t" style="left:1084px;top:425px;width:128px;height:19px;overflow:hidden"><div class="t" style="left:3.5px;top:4.32px;font-size:12px;color:#111;">2</div></div>
<div class="t" style="left:1213px;top:425px;width:96px;height:19px;overflow:hidden"><div class="t" style="left:2.5px;top:4.32px;font-size:12px;color:#111;transform:scaleX(0.92);transform-origin:0 0;">4.81</div></div>
<div class="a" style="left:228px;top:444px;width:1082px;height:19px;background:#ffffff"></div>
<div class="a" style="left:1310px;top:444px;width:177px;height:19px;background:#ffffff"></div>
<div class="t" style="left:228px;top:444px;width:89px;height:19px;overflow:hidden"><div class="t" style="left:2.8px;top:4.28px;font-size:12px;color:#111;transform:scaleX(0.97);transform-origin:0 0;">32783</div></div>
<div class="t" style="left:318px;top:444px;width:122px;height:19px;overflow:hidden"><div class="t" style="left:3.5px;top:4.28px;font-size:12px;color:#111;transform:scaleX(0.985);transform-origin:0 0;">Pork Tenderloin</div></div>
<div class="t" style="left:441px;top:444px;width:92px;height:19px;overflow:hidden"><div class="t" style="left:3.5px;top:4.28px;font-size:12px;color:#111;transform:scaleX(0.985);transform-origin:0 0;">Tenderloin</div></div>
<div class="t" style="left:534px;top:444px;width:116px;height:19px;overflow:hidden"><div class="t" style="left:0.8px;top:4.28px;font-size:12px;color:#1a1aff;text-decoration:underline;transform:scaleX(0.965);transform-origin:0 0;">150084688127</div></div>
<div class="t" style="left:651px;top:444px;width:122px;height:19px;overflow:hidden"><div class="t" style="left:2.5px;top:4.28px;font-size:12px;color:#111;transform:scaleX(1.02);transform-origin:0 0;">20000000019325518</div></div>
<div class="t" style="left:774px;top:444px;width:35px;height:19px;overflow:hidden"><div class="t" style="left:2.5px;top:4.28px;font-size:12px;color:#111;transform:scaleX(0.96);transform-origin:0 0;">4.20</div></div>
<div class="t" style="left:810px;top:444px;width:136px;height:19px;overflow:hidden"><div class="t" style="left:2.5px;top:4.28px;font-size:12px;color:#111;">2024/09/03 6:23:52 AM</div></div>
<div class="t" style="left:947px;top:444px;width:136px;height:19px;overflow:hidden"><div class="t" style="left:2.5px;top:4.28px;font-size:12px;color:#111;transform:scaleX(1.006);transform-origin:0 0;">2024/09/03 11:12:24 AM</div></div>
<div class="t" style="left:1084px;top:444px;width:128px;height:19px;overflow:hidden"><div class="t" style="left:3.5px;top:4.28px;font-size:12px;color:#111;">2</div></div>
<div class="t" style="left:1213px;top:444px;width:96px;height:19px;overflow:hidden"><div class="t" style="left:2.5px;top:4.28px;font-size:12px;color:#111;transform:scaleX(0.92);transform-origin:0 0;">4.81</div></div>
<div class="a" style="left:228px;top:463px;width:1082px;height:19px;background:#add8e6"></div>
<div class="a" style="left:1310px;top:463px;width:177px;height:19px;background:#add8e6"></div>
<div class="t" style="left:228px;top:463px;width:89px;height:19px;overflow:hidden"><div class="t" style="left:2.8px;top:4.24px;font-size:12px;color:#111;transform:scaleX(0.97);transform-origin:0 0;">34244</div></div>
<div class="t" style="left:318px;top:463px;width:122px;height:19px;overflow:hidden"><div class="t" style="left:3.5px;top:4.24px;font-size:12px;color:#111;transform:scaleX(0.985);transform-origin:0 0;">Pork Tenderloin</div></div>
<div class="t" style="left:441px;top:463px;width:92px;height:19px;overflow:hidden"><div class="t" style="left:3.5px;top:4.24px;font-size:12px;color:#111;transform:scaleX(0.985);transform-origin:0 0;">Tenderloin</div></div>
<div class="t" style="left:534px;top:463px;width:116px;height:19px;overflow:hidden"><div class="t" style="left:0.8px;top:4.24px;font-size:12px;color:#1a1aff;text-decoration:underline;transform:scaleX(0.965);transform-origin:0 0;">150084688128</div></div>
<div class="t" style="left:651px;top:463px;width:122px;height:19px;overflow:hidden"><div class="t" style="left:2.5px;top:4.24px;font-size:12px;color:#111;transform:scaleX(1.02);transform-origin:0 0;">20000000019326317</div></div>
<div class="t" style="left:774px;top:463px;width:35px;height:19px;overflow:hidden"><div class="t" style="left:2.5px;top:4.24px;font-size:12px;color:#111;transform:scaleX(0.96);transform-origin:0 0;">4.40</div></div>
<div class="t" style="left:810px;top:463px;width:136px;height:19px;overflow:hidden"><div class="t" style="left:2.5px;top:4.24px;font-size:12px;color:#111;">2024/09/03 8:03:41 AM</div></div>
<div class="t" style="left:947px;top:463px;width:136px;height:19px;overflow:hidden"><div class="t" style="left:2.5px;top:4.24px;font-size:12px;color:#111;transform:scaleX(1.006);transform-origin:0 0;">2024/09/03 11:13:49 AM</div></div>
<div class="t" style="left:1084px;top:463px;width:128px;height:19px;overflow:hidden"><div class="t" style="left:3.5px;top:4.24px;font-size:12px;color:#111;">2</div></div>
<div class="t" style="left:1213px;top:463px;width:96px;height:19px;overflow:hidden"><div class="t" style="left:2.5px;top:4.24px;font-size:12px;color:#111;transform:scaleX(0.92);transform-origin:0 0;">3.17</div></div>
<div class="a" style="left:228px;top:482px;width:1082px;height:19px;background:#ffffff"></div>
<div class="a" style="left:1310px;top:482px;width:177px;height:19px;background:#ffffff"></div>
<div class="t" style="left:228px;top:482px;width:89px;height:19px;overflow:hidden"><div class="t" style="left:2.8px;top:4.20px;font-size:12px;color:#111;transform:scaleX(0.97);transform-origin:0 0;">34244</div></div>
<div class="t" style="left:318px;top:482px;width:122px;height:19px;overflow:hidden"><div class="t" style="left:3.5px;top:4.20px;font-size:12px;color:#111;transform:scaleX(0.985);transform-origin:0 0;">Pork Tenderloin</div></div>
<div class="t" style="left:441px;top:482px;width:92px;height:19px;overflow:hidden"><div class="t" style="left:3.5px;top:4.20px;font-size:12px;color:#111;transform:scaleX(0.985);transform-origin:0 0;">Tenderloin</div></div>
<div class="t" style="left:534px;top:482px;width:116px;height:19px;overflow:hidden"><div class="t" style="left:0.8px;top:4.20px;font-size:12px;color:#1a1aff;text-decoration:underline;transform:scaleX(0.965);transform-origin:0 0;">150084688129</div></div>
<div class="t" style="left:651px;top:482px;width:122px;height:19px;overflow:hidden"><div class="t" style="left:2.5px;top:4.20px;font-size:12px;color:#111;transform:scaleX(1.02);transform-origin:0 0;">20000000019326317</div></div>
<div class="t" style="left:774px;top:482px;width:35px;height:19px;overflow:hidden"><div class="t" style="left:2.5px;top:4.20px;font-size:12px;color:#111;transform:scaleX(0.96);transform-origin:0 0;">4.50</div></div>
<div class="t" style="left:810px;top:482px;width:136px;height:19px;overflow:hidden"><div class="t" style="left:2.5px;top:4.20px;font-size:12px;color:#111;">2024/09/03 8:05:49 AM</div></div>
<div class="t" style="left:947px;top:482px;width:136px;height:19px;overflow:hidden"><div class="t" style="left:2.5px;top:4.20px;font-size:12px;color:#111;transform:scaleX(1.006);transform-origin:0 0;">2024/09/03 11:13:49 AM</div></div>
<div class="t" style="left:1084px;top:482px;width:128px;height:19px;overflow:hidden"><div class="t" style="left:3.5px;top:4.20px;font-size:12px;color:#111;">2</div></div>
<div class="t" style="left:1213px;top:482px;width:96px;height:19px;overflow:hidden"><div class="t" style="left:2.5px;top:4.20px;font-size:12px;color:#111;transform:scaleX(0.92);transform-origin:0 0;">3.13</div></div>
<div class="a" style="left:228px;top:501px;width:1082px;height:19px;background:#add8e6"></div>
<div class="a" style="left:1310px;top:501px;width:177px;height:19px;background:#add8e6"></div>
<div class="t" style="left:228px;top:501px;width:89px;height:19px;overflow:hidden"><div class="t" style="left:2.8px;top:4.16px;font-size:12px;color:#111;transform:scaleX(0.97);transform-origin:0 0;">34244</div></div>
<div class="t" style="left:318px;top:501px;width:122px;height:19px;overflow:hidden"><div class="t" style="left:3.5px;top:4.16px;font-size:12px;color:#111;transform:scaleX(0.985);transform-origin:0 0;">Pork Tenderloin</div></div>
<div class="t" style="left:441px;top:501px;width:92px;height:19px;overflow:hidden"><div class="t" style="left:3.5px;top:4.16px;font-size:12px;color:#111;transform:scaleX(0.985);transform-origin:0 0;">Tenderloin</div></div>
<div class="t" style="left:534px;top:501px;width:116px;height:19px;overflow:hidden"><div class="t" style="left:0.8px;top:4.16px;font-size:12px;color:#1a1aff;text-decoration:underline;transform:scaleX(0.965);transform-origin:0 0;">150084688130</div></div>
<div class="t" style="left:651px;top:501px;width:122px;height:19px;overflow:hidden"><div class="t" style="left:2.5px;top:4.16px;font-size:12px;color:#111;transform:scaleX(1.02);transform-origin:0 0;">20000000019326317</div></div>
<div class="t" style="left:774px;top:501px;width:35px;height:19px;overflow:hidden"><div class="t" style="left:2.5px;top:4.16px;font-size:12px;color:#111;transform:scaleX(0.96);transform-origin:0 0;">4.30</div></div>
<div class="t" style="left:810px;top:501px;width:136px;height:19px;overflow:hidden"><div class="t" style="left:2.5px;top:4.16px;font-size:12px;color:#111;">2024/09/03 8:03:39 AM</div></div>
<div class="t" style="left:947px;top:501px;width:136px;height:19px;overflow:hidden"><div class="t" style="left:2.5px;top:4.16px;font-size:12px;color:#111;transform:scaleX(1.006);transform-origin:0 0;">2024/09/03 11:13:49 AM</div></div>
<div class="t" style="left:1084px;top:501px;width:128px;height:19px;overflow:hidden"><div class="t" style="left:3.5px;top:4.16px;font-size:12px;color:#111;">2</div></div>
<div class="t" style="left:1213px;top:501px;width:96px;height:19px;overflow:hidden"><div class="t" style="left:2.5px;top:4.16px;font-size:12px;color:#111;transform:scaleX(0.92);transform-origin:0 0;">3.17</div></div>
<div class="a" style="left:228px;top:520px;width:1082px;height:19px;background:#ffffff"></div>
<div class="a" style="left:1310px;top:520px;width:177px;height:19px;background:#ffffff"></div>
<div class="t" style="left:228px;top:520px;width:89px;height:19px;overflow:hidden"><div class="t" style="left:2.8px;top:4.12px;font-size:12px;color:#111;transform:scaleX(0.97);transform-origin:0 0;">34244</div></div>
<div class="t" style="left:318px;top:520px;width:122px;height:19px;overflow:hidden"><div class="t" style="left:3.5px;top:4.12px;font-size:12px;color:#111;transform:scaleX(0.985);transform-origin:0 0;">Pork Tenderloin</div></div>
<div class="t" style="left:441px;top:520px;width:92px;height:19px;overflow:hidden"><div class="t" style="left:3.5px;top:4.12px;font-size:12px;color:#111;transform:scaleX(0.985);transform-origin:0 0;">Tenderloin</div></div>
<div class="t" style="left:534px;top:520px;width:116px;height:19px;overflow:hidden"><div class="t" style="left:0.8px;top:4.12px;font-size:12px;color:#1a1aff;text-decoration:underline;transform:scaleX(0.965);transform-origin:0 0;">150084688132</div></div>
<div class="t" style="left:651px;top:520px;width:122px;height:19px;overflow:hidden"><div class="t" style="left:2.5px;top:4.12px;font-size:12px;color:#111;transform:scaleX(1.02);transform-origin:0 0;">20000000019326317</div></div>
<div class="t" style="left:774px;top:520px;width:35px;height:19px;overflow:hidden"><div class="t" style="left:2.5px;top:4.12px;font-size:12px;color:#111;transform:scaleX(0.96);transform-origin:0 0;">4.30</div></div>
<div class="t" style="left:810px;top:520px;width:136px;height:19px;overflow:hidden"><div class="t" style="left:2.5px;top:4.12px;font-size:12px;color:#111;">2024/09/03 8:02:54 AM</div></div>
<div class="t" style="left:947px;top:520px;width:136px;height:19px;overflow:hidden"><div class="t" style="left:2.5px;top:4.12px;font-size:12px;color:#111;transform:scaleX(1.006);transform-origin:0 0;">2024/09/03 11:13:49 AM</div></div>
<div class="t" style="left:1084px;top:520px;width:128px;height:19px;overflow:hidden"><div class="t" style="left:3.5px;top:4.12px;font-size:12px;color:#111;">2</div></div>
<div class="t" style="left:1213px;top:520px;width:96px;height:19px;overflow:hidden"><div class="t" style="left:2.5px;top:4.12px;font-size:12px;color:#111;transform:scaleX(0.92);transform-origin:0 0;">3.18</div></div>
<div class="a" style="left:228px;top:539px;width:1082px;height:19px;background:#add8e6"></div>
<div class="a" style="left:1310px;top:539px;width:177px;height:19px;background:#add8e6"></div>
<div class="t" style="left:228px;top:539px;width:89px;height:19px;overflow:hidden"><div class="t" style="left:2.8px;top:4.08px;font-size:12px;color:#111;transform:scaleX(0.97);transform-origin:0 0;">34244</div></div>
<div class="t" style="left:318px;top:539px;width:122px;height:19px;overflow:hidden"><div class="t" style="left:3.5px;top:4.08px;font-size:12px;color:#111;transform:scaleX(0.985);transform-origin:0 0;">Pork Tenderloin</div></div>
<div class="t" style="left:441px;top:539px;width:92px;height:19px;overflow:hidden"><div class="t" style="left:3.5px;top:4.08px;font-size:12px;color:#111;transform:scaleX(0.985);transform-origin:0 0;">Tenderloin</div></div>
<div class="t" style="left:534px;top:539px;width:116px;height:19px;overflow:hidden"><div class="t" style="left:0.8px;top:4.08px;font-size:12px;color:#1a1aff;text-decoration:underline;transform:scaleX(0.965);transform-origin:0 0;">150084688133</div></div>
<div class="t" style="left:651px;top:539px;width:122px;height:19px;overflow:hidden"><div class="t" style="left:2.5px;top:4.08px;font-size:12px;color:#111;transform:scaleX(1.02);transform-origin:0 0;">20000000019372970</div></div>
<div class="t" style="left:774px;top:539px;width:35px;height:19px;overflow:hidden"><div class="t" style="left:2.5px;top:4.08px;font-size:12px;color:#111;transform:scaleX(0.96);transform-origin:0 0;">4.70</div></div>
<div class="t" style="left:810px;top:539px;width:136px;height:19px;overflow:hidden"><div class="t" style="left:2.5px;top:4.08px;font-size:12px;color:#111;">2024/09/03 8:41:22 AM</div></div>
<div class="t" style="left:947px;top:539px;width:136px;height:19px;overflow:hidden"><div class="t" style="left:2.5px;top:4.08px;font-size:12px;color:#111;transform:scaleX(1.006);transform-origin:0 0;">2024/09/03 11:13:49 AM</div></div>
<div class="t" style="left:1084px;top:539px;width:128px;height:19px;overflow:hidden"><div class="t" style="left:3.5px;top:4.08px;font-size:12px;color:#111;">2</div></div>
<div class="t" style="left:1213px;top:539px;width:96px;height:19px;overflow:hidden"><div class="t" style="left:2.5px;top:4.08px;font-size:12px;color:#111;transform:scaleX(0.92);transform-origin:0 0;">2.54</div></div>
<div class="a" style="left:228px;top:558px;width:1082px;height:18px;background:#ffffff"></div>
<div class="a" style="left:1310px;top:558px;width:177px;height:18px;background:#ffffff"></div>
<div class="t" style="left:228px;top:558px;width:89px;height:19px;overflow:hidden"><div class="t" style="left:2.8px;top:4.04px;font-size:12px;color:#111;transform:scaleX(0.97);transform-origin:0 0;">34244</div></div>
<div class="t" style="left:318px;top:558px;width:122px;height:19px;overflow:hidden"><div class="t" style="left:3.5px;top:4.04px;font-size:12px;color:#111;transform:scaleX(0.985);transform-origin:0 0;">Pork Tenderloin</div></div>
<div class="t" style="left:441px;top:558px;width:92px;height:19px;overflow:hidden"><div class="t" style="left:3.5px;top:4.04px;font-size:12px;color:#111;transform:scaleX(0.985);transform-origin:0 0;">Tenderloin</div></div>
<div class="t" style="left:534px;top:558px;width:116px;height:19px;overflow:hidden"><div class="t" style="left:0.8px;top:4.04px;font-size:12px;color:#1a1aff;text-decoration:underline;transform:scaleX(0.965);transform-origin:0 0;">150084688134</div></div>
<div class="t" style="left:651px;top:558px;width:122px;height:19px;overflow:hidden"><div class="t" style="left:2.5px;top:4.04px;font-size:12px;color:#111;transform:scaleX(1.02);transform-origin:0 0;">20000000019372970</div></div>
<div class="t" style="left:774px;top:558px;width:35px;height:19px;overflow:hidden"><div class="t" style="left:2.5px;top:4.04px;font-size:12px;color:#111;transform:scaleX(0.96);transform-origin:0 0;">4.70</div></div>
<div class="t" style="left:810px;top:558px;width:136px;height:19px;overflow:hidden"><div class="t" style="left:2.5px;top:4.04px;font-size:12px;color:#111;">2024/09/03 8:41:20 AM</div></div>
<div class="t" style="left:947px;top:558px;width:136px;height:19px;overflow:hidden"><div class="t" style="left:2.5px;top:4.04px;font-size:12px;color:#111;transform:scaleX(1.006);transform-origin:0 0;">2024/09/03 11:13:49 AM</div></div>
<div class="t" style="left:1084px;top:558px;width:128px;height:19px;overflow:hidden"><div class="t" style="left:3.5px;top:4.04px;font-size:12px;color:#111;">2</div></div>
<div class="t" style="left:1213px;top:558px;width:96px;height:19px;overflow:hidden"><div class="t" style="left:2.5px;top:4.04px;font-size:12px;color:#111;transform:scaleX(0.92);transform-origin:0 0;">2.54</div></div>
<div class="a" style="left:228px;top:576px;width:1082px;height:19px;background:#add8e6"></div>
<div class="a" style="left:1310px;top:576px;width:177px;height:19px;background:#add8e6"></div>
<div class="t" style="left:228px;top:576px;width:89px;height:19px;overflow:hidden"><div class="t" style="left:2.8px;top:5.00px;font-size:12px;color:#111;transform:scaleX(0.97);transform-origin:0 0;">34244</div></div>
<div class="t" style="left:318px;top:576px;width:122px;height:19px;overflow:hidden"><div class="t" style="left:3.5px;top:5.00px;font-size:12px;color:#111;transform:scaleX(0.985);transform-origin:0 0;">Pork Tenderloin</div></div>
<div class="t" style="left:441px;top:576px;width:92px;height:19px;overflow:hidden"><div class="t" style="left:3.5px;top:5.00px;font-size:12px;color:#111;transform:scaleX(0.985);transform-origin:0 0;">Tenderloin</div></div>
<div class="t" style="left:534px;top:576px;width:116px;height:19px;overflow:hidden"><div class="t" style="left:0.8px;top:5.00px;font-size:12px;color:#1a1aff;text-decoration:underline;transform:scaleX(0.965);transform-origin:0 0;">150084688135</div></div>
<div class="t" style="left:651px;top:576px;width:122px;height:19px;overflow:hidden"><div class="t" style="left:2.5px;top:5.00px;font-size:12px;color:#111;transform:scaleX(1.02);transform-origin:0 0;">20000000019326317</div></div>
<div class="t" style="left:774px;top:576px;width:35px;height:19px;overflow:hidden"><div class="t" style="left:2.5px;top:5.00px;font-size:12px;color:#111;transform:scaleX(0.96);transform-origin:0 0;">4.90</div></div>
<div class="t" style="left:810px;top:576px;width:136px;height:19px;overflow:hidden"><div class="t" style="left:2.5px;top:5.00px;font-size:12px;color:#111;">2024/09/03 8:51:40 AM</div></div>
<div class="t" style="left:947px;top:576px;width:136px;height:19px;overflow:hidden"><div class="t" style="left:2.5px;top:5.00px;font-size:12px;color:#111;transform:scaleX(1.006);transform-origin:0 0;">2024/09/03 11:13:49 AM</div></div>
<div class="t" style="left:1084px;top:576px;width:128px;height:19px;overflow:hidden"><div class="t" style="left:3.5px;top:5.00px;font-size:12px;color:#111;">2</div></div>
<div class="t" style="left:1213px;top:576px;width:96px;height:19px;overflow:hidden"><div class="t" style="left:2.5px;top:5.00px;font-size:12px;color:#111;transform:scaleX(0.92);transform-origin:0 0;">2.37</div></div>
<div class="a" style="left:228px;top:595px;width:1082px;height:19px;background:#ffffff"></div>
<div class="a" style="left:1310px;top:595px;width:177px;height:19px;background:#ffffff"></div>
<div class="t" style="left:228px;top:595px;width:89px;height:19px;overflow:hidden"><div class="t" style="left:2.8px;top:4.96px;font-size:12px;color:#111;transform:scaleX(0.97);transform-origin:0 0;">34244</div></div>
<div class="t" style="left:318px;top:595px;width:122px;height:19px;overflow:hidden"><div class="t" style="left:3.5px;top:4.96px;font-size:12px;color:#111;transform:scaleX(0.985);transform-origin:0 0;">Pork Tenderloin</div></div>
<div class="t" style="left:441px;top:595px;width:92px;height:19px;overflow:hidden"><div class="t" style="left:3.5px;top:4.96px;font-size:12px;color:#111;transform:scaleX(0.985);transform-origin:0 0;">Tenderloin</div></div>
<div class="t" style="left:534px;top:595px;width:116px;height:19px;overflow:hidden"><div class="t" style="left:0.8px;top:4.96px;font-size:12px;color:#1a1aff;text-decoration:underline;transform:scaleX(0.965);transform-origin:0 0;">150084688136</div></div>
<div class="t" style="left:651px;top:595px;width:122px;height:19px;overflow:hidden"><div class="t" style="left:2.5px;top:4.96px;font-size:12px;color:#111;transform:scaleX(1.02);transform-origin:0 0;">20000000019326317</div></div>
<div class="t" style="left:774px;top:595px;width:35px;height:19px;overflow:hidden"><div class="t" style="left:2.5px;top:4.96px;font-size:12px;color:#111;transform:scaleX(0.96);transform-origin:0 0;">4.50</div></div>
<div class="t" style="left:810px;top:595px;width:136px;height:19px;overflow:hidden"><div class="t" style="left:2.5px;top:4.96px;font-size:12px;color:#111;">2024/09/03 8:51:37 AM</div></div>
<div class="t" style="left:947px;top:595px;width:136px;height:19px;overflow:hidden"><div class="t" style="left:2.5px;top:4.96px;font-size:12px;color:#111;transform:scaleX(1.006);transform-origin:0 0;">2024/09/03 11:13:49 AM</div></div>
<div class="t" style="left:1084px;top:595px;width:128px;height:19px;overflow:hidden"><div class="t" style="left:3.5px;top:4.96px;font-size:12px;color:#111;">2</div></div>
<div class="t" style="left:1213px;top:595px;width:96px;height:19px;overflow:hidden"><div class="t" style="left:2.5px;top:4.96px;font-size:12px;color:#111;transform:scaleX(0.92);transform-origin:0 0;">2.37</div></div>
<div class="a" style="left:228px;top:614px;width:1082px;height:19px;background:#add8e6"></div>
<div class="a" style="left:1310px;top:614px;width:177px;height:19px;background:#add8e6"></div>
<div class="t" style="left:228px;top:614px;width:89px;height:19px;overflow:hidden"><div class="t" style="left:2.8px;top:4.92px;font-size:12px;color:#111;transform:scaleX(0.97);transform-origin:0 0;">34244</div></div>
<div class="t" style="left:318px;top:614px;width:122px;height:19px;overflow:hidden"><div class="t" style="left:3.5px;top:4.92px;font-size:12px;color:#111;transform:scaleX(0.985);transform-origin:0 0;">Pork Tenderloin</div></div>
<div class="t" style="left:441px;top:614px;width:92px;height:19px;overflow:hidden"><div class="t" style="left:3.5px;top:4.92px;font-size:12px;color:#111;transform:scaleX(0.985);transform-origin:0 0;">Tenderloin</div></div>
<div class="t" style="left:534px;top:614px;width:116px;height:19px;overflow:hidden"><div class="t" style="left:0.8px;top:4.92px;font-size:12px;color:#1a1aff;text-decoration:underline;transform:scaleX(0.965);transform-origin:0 0;">150084688137</div></div>
<div class="t" style="left:651px;top:614px;width:122px;height:19px;overflow:hidden"><div class="t" style="left:2.5px;top:4.92px;font-size:12px;color:#111;transform:scaleX(1.02);transform-origin:0 0;">20000000019326317</div></div>
<div class="t" style="left:774px;top:614px;width:35px;height:19px;overflow:hidden"><div class="t" style="left:2.5px;top:4.92px;font-size:12px;color:#111;transform:scaleX(0.96);transform-origin:0 0;">4.70</div></div>
<div class="t" style="left:810px;top:614px;width:136px;height:19px;overflow:hidden"><div class="t" style="left:2.5px;top:4.92px;font-size:12px;color:#111;">2024/09/03 8:45:12 AM</div></div>
<div class="t" style="left:947px;top:614px;width:136px;height:19px;overflow:hidden"><div class="t" style="left:2.5px;top:4.92px;font-size:12px;color:#111;transform:scaleX(1.006);transform-origin:0 0;">2024/09/03 11:13:49 AM</div></div>
<div class="t" style="left:1084px;top:614px;width:128px;height:19px;overflow:hidden"><div class="t" style="left:3.5px;top:4.92px;font-size:12px;color:#111;">2</div></div>
<div class="t" style="left:1213px;top:614px;width:96px;height:19px;overflow:hidden"><div class="t" style="left:2.5px;top:4.92px;font-size:12px;color:#111;transform:scaleX(0.92);transform-origin:0 0;">2.48</div></div>
<div class="a" style="left:228px;top:633px;width:1082px;height:19px;background:#ffffff"></div>
<div class="a" style="left:1310px;top:633px;width:177px;height:19px;background:#ffffff"></div>
<div class="t" style="left:228px;top:633px;width:89px;height:19px;overflow:hidden"><div class="t" style="left:2.8px;top:4.88px;font-size:12px;color:#111;transform:scaleX(0.97);transform-origin:0 0;">34244</div></div>
<div class="t" style="left:318px;top:633px;width:122px;height:19px;overflow:hidden"><div class="t" style="left:3.5px;top:4.88px;font-size:12px;color:#111;transform:scaleX(0.985);transform-origin:0 0;">Pork Tenderloin</div></div>
<div class="t" style="left:441px;top:633px;width:92px;height:19px;overflow:hidden"><div class="t" style="left:3.5px;top:4.88px;font-size:12px;color:#111;transform:scaleX(0.985);transform-origin:0 0;">Tenderloin</div></div>
<div class="t" style="left:534px;top:633px;width:116px;height:19px;overflow:hidden"><div class="t" style="left:0.8px;top:4.88px;font-size:12px;color:#1a1aff;text-decoration:underline;transform:scaleX(0.965);transform-origin:0 0;">150084688138</div></div>
<div class="t" style="left:651px;top:633px;width:122px;height:19px;overflow:hidden"><div class="t" style="left:2.5px;top:4.88px;font-size:12px;color:#111;transform:scaleX(1.02);transform-origin:0 0;">20000000019326317</div></div>
<div class="t" style="left:774px;top:633px;width:35px;height:19px;overflow:hidden"><div class="t" style="left:2.5px;top:4.88px;font-size:12px;color:#111;transform:scaleX(0.96);transform-origin:0 0;">4.30</div></div>
<div class="t" style="left:810px;top:633px;width:136px;height:19px;overflow:hidden"><div class="t" style="left:2.5px;top:4.88px;font-size:12px;color:#111;">2024/09/03 7:55:33 AM</div></div>
<div class="t" style="left:947px;top:633px;width:136px;height:19px;overflow:hidden"><div class="t" style="left:2.5px;top:4.88px;font-size:12px;color:#111;transform:scaleX(1.006);transform-origin:0 0;">2024/09/03 11:13:49 AM</div></div>
<div class="t" style="left:1084px;top:633px;width:128px;height:19px;overflow:hidden"><div class="t" style="left:3.5px;top:4.88px;font-size:12px;color:#111;">2</div></div>
<div class="t" style="left:1213px;top:633px;width:96px;height:19px;overflow:hidden"><div class="t" style="left:2.5px;top:4.88px;font-size:12px;color:#111;transform:scaleX(0.92);transform-origin:0 0;">3.30</div></div>
<div class="a" style="left:228px;top:652px;width:1082px;height:19px;background:#add8e6"></div>
<div class="a" style="left:1310px;top:652px;width:177px;height:19px;background:#add8e6"></div>
<div class="t" style="left:228px;top:652px;width:89px;height:19px;overflow:hidden"><div class="t" style="left:2.8px;top:4.84px;font-size:12px;color:#111;transform:scaleX(0.97);transform-origin:0 0;">34244</div></div>
<div class="t" style="left:318px;top:652px;width:122px;height:19px;overflow:hidden"><div class="t" style="left:3.5px;top:4.84px;font-size:12px;color:#111;transform:scaleX(0.985);transform-origin:0 0;">Pork Tenderloin</div></div>
<div class="t" style="left:441px;top:652px;width:92px;height:19px;overflow:hidden"><div class="t" style="left:3.5px;top:4.84px;font-size:12px;color:#111;transform:scaleX(0.985);transform-origin:0 0;">Tenderloin</div></div>
<div class="t" style="left:534px;top:652px;width:116px;height:19px;overflow:hidden"><div class="t" style="left:0.8px;top:4.84px;font-size:12px;color:#1a1aff;text-decoration:underline;transform:scaleX(0.965);transform-origin:0 0;">150084688139</div></div>
<div class="t" style="left:651px;top:652px;width:122px;height:19px;overflow:hidden"><div class="t" style="left:2.5px;top:4.84px;font-size:12px;color:#111;transform:scaleX(1.02);transform-origin:0 0;">20000000019326317</div></div>
<div class="t" style="left:774px;top:652px;width:35px;height:19px;overflow:hidden"><div class="t" style="left:2.5px;top:4.84px;font-size:12px;color:#111;transform:scaleX(0.96);transform-origin:0 0;">4.10</div></div>
<div class="t" style="left:810px;top:652px;width:136px;height:19px;overflow:hidden"><div class="t" style="left:2.5px;top:4.84px;font-size:12px;color:#111;">2024/09/03 7:32:48 AM</div></div>
<div class="t" style="left:947px;top:652px;width:136px;height:19px;overflow:hidden"><div class="t" style="left:2.5px;top:4.84px;font-size:12px;color:#111;transform:scaleX(1.006);transform-origin:0 0;">2024/09/03 11:13:49 AM</div></div>
<div class="t" style="left:1084px;top:652px;width:128px;height:19px;overflow:hidden"><div class="t" style="left:3.5px;top:4.84px;font-size:12px;color:#111;">2</div></div>
<div class="t" style="left:1213px;top:652px;width:96px;height:19px;overflow:hidden"><div class="t" style="left:2.5px;top:4.84px;font-size:12px;color:#111;transform:scaleX(0.92);transform-origin:0 0;">3.68</div></div>
<div class="a" style="left:228px;top:671px;width:1082px;height:19px;background:#ffffff"></div>
<div class="a" style="left:1310px;top:671px;width:177px;height:19px;background:#ffffff"></div>
<div class="t" style="left:228px;top:671px;width:89px;height:19px;overflow:hidden"><div class="t" style="left:2.8px;top:4.80px;font-size:12px;color:#111;transform:scaleX(0.97);transform-origin:0 0;">34244</div></div>
<div class="t" style="left:318px;top:671px;width:122px;height:19px;overflow:hidden"><div class="t" style="left:3.5px;top:4.80px;font-size:12px;color:#111;transform:scaleX(0.985);transform-origin:0 0;">Pork Tenderloin</div></div>
<div class="t" style="left:441px;top:671px;width:92px;height:19px;overflow:hidden"><div class="t" style="left:3.5px;top:4.80px;font-size:12px;color:#111;transform:scaleX(0.985);transform-origin:0 0;">Tenderloin</div></div>
<div class="t" style="left:534px;top:671px;width:116px;height:19px;overflow:hidden"><div class="t" style="left:0.8px;top:4.80px;font-size:12px;color:#1a1aff;text-decoration:underline;transform:scaleX(0.965);transform-origin:0 0;">150084688140</div></div>
<div class="t" style="left:651px;top:671px;width:122px;height:19px;overflow:hidden"><div class="t" style="left:2.5px;top:4.80px;font-size:12px;color:#111;transform:scaleX(1.02);transform-origin:0 0;">20000000019326317</div></div>
<div class="t" style="left:774px;top:671px;width:35px;height:19px;overflow:hidden"><div class="t" style="left:2.5px;top:4.80px;font-size:12px;color:#111;transform:scaleX(0.96);transform-origin:0 0;">4.30</div></div>
<div class="t" style="left:810px;top:671px;width:136px;height:19px;overflow:hidden"><div class="t" style="left:2.5px;top:4.80px;font-size:12px;color:#111;">2024/09/03 7:45:27 AM</div></div>
<div class="t" style="left:947px;top:671px;width:136px;height:19px;overflow:hidden"><div class="t" style="left:2.5px;top:4.80px;font-size:12px;color:#111;transform:scaleX(1.006);transform-origin:0 0;">2024/09/03 11:13:49 AM</div></div>
<div class="t" style="left:1084px;top:671px;width:128px;height:19px;overflow:hidden"><div class="t" style="left:3.5px;top:4.80px;font-size:12px;color:#111;">2</div></div>
<div class="t" style="left:1213px;top:671px;width:96px;height:19px;overflow:hidden"><div class="t" style="left:2.5px;top:4.80px;font-size:12px;color:#111;transform:scaleX(0.92);transform-origin:0 0;">3.47</div></div>
<div class="a" style="left:228px;top:690px;width:1082px;height:19px;background:#add8e6"></div>
<div class="a" style="left:1310px;top:690px;width:177px;height:19px;background:#add8e6"></div>
<div class="t" style="left:228px;top:690px;width:89px;height:19px;overflow:hidden"><div class="t" style="left:2.8px;top:4.76px;font-size:12px;color:#111;transform:scaleX(0.97);transform-origin:0 0;">34244</div></div>
<div class="t" style="left:318px;top:690px;width:122px;height:19px;overflow:hidden"><div class="t" style="left:3.5px;top:4.76px;font-size:12px;color:#111;transform:scaleX(0.985);transform-origin:0 0;">Pork Tenderloin</div></div>
<div class="t" style="left:441px;top:690px;width:92px;height:19px;overflow:hidden"><div class="t" style="left:3.5px;top:4.76px;font-size:12px;color:#111;transform:scaleX(0.985);transform-origin:0 0;">Tenderloin</div></div>
<div class="t" style="left:534px;top:690px;width:116px;height:19px;overflow:hidden"><div class="t" style="left:0.8px;top:4.76px;font-size:12px;color:#1a1aff;text-decoration:underline;transform:scaleX(0.965);transform-origin:0 0;">150084688141</div></div>
<div class="t" style="left:651px;top:690px;width:122px;height:19px;overflow:hidden"><div class="t" style="left:2.5px;top:4.76px;font-size:12px;color:#111;transform:scaleX(1.02);transform-origin:0 0;">20000000019326317</div></div>
<div class="t" style="left:774px;top:690px;width:35px;height:19px;overflow:hidden"><div class="t" style="left:2.5px;top:4.76px;font-size:12px;color:#111;transform:scaleX(0.96);transform-origin:0 0;">4.70</div></div>
<div class="t" style="left:810px;top:690px;width:136px;height:19px;overflow:hidden"><div class="t" style="left:2.5px;top:4.76px;font-size:12px;color:#111;">2024/09/03 7:25:53 AM</div></div>
<div class="t" style="left:947px;top:690px;width:136px;height:19px;overflow:hidden"><div class="t" style="left:2.5px;top:4.76px;font-size:12px;color:#111;transform:scaleX(1.006);transform-origin:0 0;">2024/09/03 11:13:49 AM</div></div>
<div class="t" style="left:1084px;top:690px;width:128px;height:19px;overflow:hidden"><div class="t" style="left:3.5px;top:4.76px;font-size:12px;color:#111;">2</div></div>
<div class="t" style="left:1213px;top:690px;width:96px;height:19px;overflow:hidden"><div class="t" style="left:2.5px;top:4.76px;font-size:12px;color:#111;transform:scaleX(0.92);transform-origin:0 0;">3.80</div></div>
<div class="a" style="left:228px;top:709px;width:1082px;height:19px;background:#ffffff"></div>
<div class="a" style="left:1310px;top:709px;width:177px;height:19px;background:#ffffff"></div>
<div class="t" style="left:228px;top:709px;width:89px;height:19px;overflow:hidden"><div class="t" style="left:2.8px;top:4.72px;font-size:12px;color:#111;transform:scaleX(0.97);transform-origin:0 0;">34244</div></div>
<div class="t" style="left:318px;top:709px;width:122px;height:19px;overflow:hidden"><div class="t" style="left:3.5px;top:4.72px;font-size:12px;color:#111;transform:scaleX(0.985);transform-origin:0 0;">Pork Tenderloin</div></div>
<div class="t" style="left:441px;top:709px;width:92px;height:19px;overflow:hidden"><div class="t" style="left:3.5px;top:4.72px;font-size:12px;color:#111;transform:scaleX(0.985);transform-origin:0 0;">Tenderloin</div></div>
<div class="t" style="left:534px;top:709px;width:116px;height:19px;overflow:hidden"><div class="t" style="left:0.8px;top:4.72px;font-size:12px;color:#1a1aff;text-decoration:underline;transform:scaleX(0.965);transform-origin:0 0;">150084688142</div></div>
<div class="t" style="left:651px;top:709px;width:122px;height:19px;overflow:hidden"><div class="t" style="left:2.5px;top:4.72px;font-size:12px;color:#111;transform:scaleX(1.02);transform-origin:0 0;">20000000019326317</div></div>
<div class="t" style="left:774px;top:709px;width:35px;height:19px;overflow:hidden"><div class="t" style="left:2.5px;top:4.72px;font-size:12px;color:#111;transform:scaleX(0.96);transform-origin:0 0;">4.50</div></div>
<div class="t" style="left:810px;top:709px;width:136px;height:19px;overflow:hidden"><div class="t" style="left:2.5px;top:4.72px;font-size:12px;color:#111;">2024/09/03 7:45:24 AM</div></div>
<div class="t" style="left:947px;top:709px;width:136px;height:19px;overflow:hidden"><div class="t" style="left:2.5px;top:4.72px;font-size:12px;color:#111;transform:scaleX(1.006);transform-origin:0 0;">2024/09/03 11:13:49 AM</div></div>
<div class="t" style="left:1084px;top:709px;width:128px;height:19px;overflow:hidden"><div class="t" style="left:3.5px;top:4.72px;font-size:12px;color:#111;">2</div></div>
<div class="t" style="left:1213px;top:709px;width:96px;height:19px;overflow:hidden"><div class="t" style="left:2.5px;top:4.72px;font-size:12px;color:#111;transform:scaleX(0.92);transform-origin:0 0;">3.47</div></div>
<div class="a" style="left:228px;top:728px;width:1082px;height:19px;background:#add8e6"></div>
<div class="a" style="left:1310px;top:728px;width:177px;height:19px;background:#add8e6"></div>
<div class="t" style="left:228px;top:728px;width:89px;height:19px;overflow:hidden"><div class="t" style="left:2.8px;top:4.68px;font-size:12px;color:#111;transform:scaleX(0.97);transform-origin:0 0;">34244</div></div>
<div class="t" style="left:318px;top:728px;width:122px;height:19px;overflow:hidden"><div class="t" style="left:3.5px;top:4.68px;font-size:12px;color:#111;transform:scaleX(0.985);transform-origin:0 0;">Pork Tenderloin</div></div>
<div class="t" style="left:441px;top:728px;width:92px;height:19px;overflow:hidden"><div class="t" style="left:3.5px;top:4.68px;font-size:12px;color:#111;transform:scaleX(0.985);transform-origin:0 0;">Tenderloin</div></div>
<div class="t" style="left:534px;top:728px;width:116px;height:19px;overflow:hidden"><div class="t" style="left:0.8px;top:4.68px;font-size:12px;color:#1a1aff;text-decoration:underline;transform:scaleX(0.965);transform-origin:0 0;">150084688143</div></div>
<div class="t" style="left:651px;top:728px;width:122px;height:19px;overflow:hidden"><div class="t" style="left:2.5px;top:4.68px;font-size:12px;color:#111;transform:scaleX(1.02);transform-origin:0 0;">20000000019326317</div></div>
<div class="t" style="left:774px;top:728px;width:35px;height:19px;overflow:hidden"><div class="t" style="left:2.5px;top:4.68px;font-size:12px;color:#111;transform:scaleX(0.96);transform-origin:0 0;">4.50</div></div>
<div class="t" style="left:810px;top:728px;width:136px;height:19px;overflow:hidden"><div class="t" style="left:2.5px;top:4.68px;font-size:12px;color:#111;">2024/09/03 7:25:30 AM</div></div>
<div class="t" style="left:947px;top:728px;width:136px;height:19px;overflow:hidden"><div class="t" style="left:2.5px;top:4.68px;font-size:12px;color:#111;transform:scaleX(1.006);transform-origin:0 0;">2024/09/03 11:13:49 AM</div></div>
<div class="t" style="left:1084px;top:728px;width:128px;height:19px;overflow:hidden"><div class="t" style="left:3.5px;top:4.68px;font-size:12px;color:#111;">2</div></div>
<div class="t" style="left:1213px;top:728px;width:96px;height:19px;overflow:hidden"><div class="t" style="left:2.5px;top:4.68px;font-size:12px;color:#111;transform:scaleX(0.92);transform-origin:0 0;">3.81</div></div>
<div class="a" style="left:228px;top:747px;width:1082px;height:19px;background:#ffffff"></div>
<div class="a" style="left:1310px;top:747px;width:177px;height:19px;background:#ffffff"></div>
<div class="t" style="left:228px;top:747px;width:89px;height:19px;overflow:hidden"><div class="t" style="left:2.8px;top:4.64px;font-size:12px;color:#111;transform:scaleX(0.97);transform-origin:0 0;">34244</div></div>
<div class="t" style="left:318px;top:747px;width:122px;height:19px;overflow:hidden"><div class="t" style="left:3.5px;top:4.64px;font-size:12px;color:#111;transform:scaleX(0.985);transform-origin:0 0;">Pork Tenderloin</div></div>
<div class="t" style="left:441px;top:747px;width:92px;height:19px;overflow:hidden"><div class="t" style="left:3.5px;top:4.64px;font-size:12px;color:#111;transform:scaleX(0.985);transform-origin:0 0;">Tenderloin</div></div>
<div class="t" style="left:534px;top:747px;width:116px;height:19px;overflow:hidden"><div class="t" style="left:0.8px;top:4.64px;font-size:12px;color:#1a1aff;text-decoration:underline;transform:scaleX(0.965);transform-origin:0 0;">150084688144</div></div>
<div class="t" style="left:651px;top:747px;width:122px;height:19px;overflow:hidden"><div class="t" style="left:2.5px;top:4.64px;font-size:12px;color:#111;transform:scaleX(1.02);transform-origin:0 0;">20000000019326317</div></div>
<div class="t" style="left:774px;top:747px;width:35px;height:19px;overflow:hidden"><div class="t" style="left:2.5px;top:4.64px;font-size:12px;color:#111;transform:scaleX(0.96);transform-origin:0 0;">4.30</div></div>
<div class="t" style="left:810px;top:747px;width:136px;height:19px;overflow:hidden"><div class="t" style="left:2.5px;top:4.64px;font-size:12px;color:#111;">2024/09/03 7:55:35 AM</div></div>
<div class="t" style="left:947px;top:747px;width:136px;height:19px;overflow:hidden"><div class="t" style="left:2.5px;top:4.64px;font-size:12px;color:#111;transform:scaleX(1.006);transform-origin:0 0;">2024/09/03 11:13:49 AM</div></div>
<div class="t" style="left:1084px;top:747px;width:128px;height:19px;overflow:hidden"><div class="t" style="left:3.5px;top:4.64px;font-size:12px;color:#111;">2</div></div>
<div class="t" style="left:1213px;top:747px;width:96px;height:19px;overflow:hidden"><div class="t" style="left:2.5px;top:4.64px;font-size:12px;color:#111;transform:scaleX(0.92);transform-origin:0 0;">3.30</div></div>
<div class="a" style="left:228px;top:766px;width:1082px;height:19px;background:#add8e6"></div>
<div class="a" style="left:1310px;top:766px;width:177px;height:19px;background:#add8e6"></div>
<div class="t" style="left:228px;top:766px;width:89px;height:19px;overflow:hidden"><div class="t" style="left:2.8px;top:4.60px;font-size:12px;color:#111;transform:scaleX(0.97);transform-origin:0 0;">34244</div></div>
<div class="t" style="left:318px;top:766px;width:122px;height:19px;overflow:hidden"><div class="t" style="left:3.5px;top:4.60px;font-size:12px;color:#111;transform:scaleX(0.985);transform-origin:0 0;">Pork Tenderloin</div></div>
<div class="t" style="left:441px;top:766px;width:92px;height:19px;overflow:hidden"><div class="t" style="left:3.5px;top:4.60px;font-size:12px;color:#111;transform:scaleX(0.985);transform-origin:0 0;">Tenderloin</div></div>
<div class="t" style="left:534px;top:766px;width:116px;height:19px;overflow:hidden"><div class="t" style="left:0.8px;top:4.60px;font-size:12px;color:#1a1aff;text-decoration:underline;transform:scaleX(0.965);transform-origin:0 0;">150084688145</div></div>
<div class="t" style="left:651px;top:766px;width:122px;height:19px;overflow:hidden"><div class="t" style="left:2.5px;top:4.60px;font-size:12px;color:#111;transform:scaleX(1.02);transform-origin:0 0;">20000000019326317</div></div>
<div class="t" style="left:774px;top:766px;width:35px;height:19px;overflow:hidden"><div class="t" style="left:2.5px;top:4.60px;font-size:12px;color:#111;transform:scaleX(0.96);transform-origin:0 0;">4.60</div></div>
<div class="t" style="left:810px;top:766px;width:136px;height:19px;overflow:hidden"><div class="t" style="left:2.5px;top:4.60px;font-size:12px;color:#111;">2024/09/03 7:22:45 AM</div></div>
<div class="t" style="left:947px;top:766px;width:136px;height:19px;overflow:hidden"><div class="t" style="left:2.5px;top:4.60px;font-size:12px;color:#111;transform:scaleX(1.006);transform-origin:0 0;">2024/09/03 11:13:49 AM</div></div>
<div class="t" style="left:1084px;top:766px;width:128px;height:19px;overflow:hidden"><div class="t" style="left:3.5px;top:4.60px;font-size:12px;color:#111;">2</div></div>
<div class="t" style="left:1213px;top:766px;width:96px;height:19px;overflow:hidden"><div class="t" style="left:2.5px;top:4.60px;font-size:12px;color:#111;transform:scaleX(0.92);transform-origin:0 0;">3.85</div></div>
<div class="a" style="left:228px;top:785px;width:1082px;height:19px;background:#ffffff"></div>
<div class="a" style="left:1310px;top:785px;width:177px;height:19px;background:#ffffff"></div>
<div class="t" style="left:228px;top:785px;width:89px;height:19px;overflow:hidden"><div class="t" style="left:2.8px;top:4.56px;font-size:12px;color:#111;transform:scaleX(0.97);transform-origin:0 0;">34244</div></div>
<div class="t" style="left:318px;top:785px;width:122px;height:19px;overflow:hidden"><div class="t" style="left:3.5px;top:4.56px;font-size:12px;color:#111;transform:scaleX(0.985);transform-origin:0 0;">Pork Tenderloin</div></div>
<div class="t" style="left:441px;top:785px;width:92px;height:19px;overflow:hidden"><div class="t" style="left:3.5px;top:4.56px;font-size:12px;color:#111;transform:scaleX(0.985);transform-origin:0 0;">Tenderloin</div></div>
<div class="t" style="left:534px;top:785px;width:116px;height:19px;overflow:hidden"><div class="t" style="left:0.8px;top:4.56px;font-size:12px;color:#1a1aff;text-decoration:underline;transform:scaleX(0.965);transform-origin:0 0;">150084688146</div></div>
<div class="t" style="left:651px;top:785px;width:122px;height:19px;overflow:hidden"><div class="t" style="left:2.5px;top:4.56px;font-size:12px;color:#111;transform:scaleX(1.02);transform-origin:0 0;">20000000019326317</div></div>
<div class="t" style="left:774px;top:785px;width:35px;height:19px;overflow:hidden"><div class="t" style="left:2.5px;top:4.56px;font-size:12px;color:#111;transform:scaleX(0.96);transform-origin:0 0;">4.20</div></div>
<div class="t" style="left:810px;top:785px;width:136px;height:19px;overflow:hidden"><div class="t" style="left:2.5px;top:4.56px;font-size:12px;color:#111;">2024/09/03 7:56:57 AM</div></div>
<div class="t" style="left:947px;top:785px;width:136px;height:19px;overflow:hidden"><div class="t" style="left:2.5px;top:4.56px;font-size:12px;color:#111;transform:scaleX(1.006);transform-origin:0 0;">2024/09/03 11:13:49 AM</div></div>
<div class="t" style="left:1084px;top:785px;width:128px;height:19px;overflow:hidden"><div class="t" style="left:3.5px;top:4.56px;font-size:12px;color:#111;">2</div></div>
<div class="t" style="left:1213px;top:785px;width:96px;height:19px;overflow:hidden"><div class="t" style="left:2.5px;top:4.56px;font-size:12px;color:#111;transform:scaleX(0.92);transform-origin:0 0;">3.28</div></div>
<div class="a" style="left:228px;top:804px;width:1082px;height:19px;background:#add8e6"></div>
<div class="a" style="left:1310px;top:804px;width:177px;height:19px;background:#add8e6"></div>
<div class="t" style="left:228px;top:804px;width:89px;height:19px;overflow:hidden"><div class="t" style="left:2.8px;top:4.52px;font-size:12px;color:#111;transform:scaleX(0.97);transform-origin:0 0;">34244</div></div>
<div class="t" style="left:318px;top:804px;width:122px;height:19px;overflow:hidden"><div class="t" style="left:3.5px;top:4.52px;font-size:12px;color:#111;transform:scaleX(0.985);transform-origin:0 0;">Pork Tenderloin</div></div>
<div class="t" style="left:441px;top:804px;width:92px;height:19px;overflow:hidden"><div class="t" style="left:3.5px;top:4.52px;font-size:12px;color:#111;transform:scaleX(0.985);transform-origin:0 0;">Tenderloin</div></div>
<div class="t" style="left:534px;top:804px;width:116px;height:19px;overflow:hidden"><div class="t" style="left:0.8px;top:4.52px;font-size:12px;color:#1a1aff;text-decoration:underline;transform:scaleX(0.965);transform-origin:0 0;">150084688147</div></div>
<div class="t" style="left:651px;top:804px;width:122px;height:19px;overflow:hidden"><div class="t" style="left:2.5px;top:4.52px;font-size:12px;color:#111;transform:scaleX(1.02);transform-origin:0 0;">20000000019326317</div></div>
<div class="t" style="left:774px;top:804px;width:35px;height:19px;overflow:hidden"><div class="t" style="left:2.5px;top:4.52px;font-size:12px;color:#111;transform:scaleX(0.96);transform-origin:0 0;">4.50</div></div>
<div class="t" style="left:810px;top:804px;width:136px;height:19px;overflow:hidden"><div class="t" style="left:2.5px;top:4.52px;font-size:12px;color:#111;">2024/09/03 7:56:54 AM</div></div>
<div class="t" style="left:947px;top:804px;width:136px;height:19px;overflow:hidden"><div class="t" style="left:2.5px;top:4.52px;font-size:12px;color:#111;transform:scaleX(1.006);transform-origin:0 0;">2024/09/03 11:13:49 AM</div></div>
<div class="t" style="left:1084px;top:804px;width:128px;height:19px;overflow:hidden"><div class="t" style="left:3.5px;top:4.52px;font-size:12px;color:#111;">2</div></div>
<div class="t" style="left:1213px;top:804px;width:96px;height:19px;overflow:hidden"><div class="t" style="left:2.5px;top:4.52px;font-size:12px;color:#111;transform:scaleX(0.92);transform-origin:0 0;">3.28</div></div>
<div class="a" style="left:228px;top:823px;width:1082px;height:15px;background:#ffffff"></div>
<div class="a" style="left:1310px;top:823px;width:177px;height:15px;background:#ffffff"></div>
<div class="t" style="left:228px;top:823px;width:89px;height:15px;overflow:hidden"><div class="t" style="left:2.8px;top:4.48px;font-size:12px;color:#111;transform:scaleX(0.97);transform-origin:0 0;">35475</div></div>
<div class="t" style="left:318px;top:823px;width:122px;height:15px;overflow:hidden"><div class="t" style="left:3.5px;top:4.48px;font-size:12px;color:#111;transform:scaleX(0.985);transform-origin:0 0;">Pork Skirt Meat</div></div>
<div class="t" style="left:441px;top:823px;width:92px;height:15px;overflow:hidden"><div class="t" style="left:3.5px;top:4.48px;font-size:12px;color:#111;transform:scaleX(0.985);transform-origin:0 0;">Sundry</div></div>
<div class="t" style="left:534px;top:823px;width:116px;height:15px;overflow:hidden"><div class="t" style="left:0.8px;top:4.48px;font-size:12px;color:#1a1aff;text-decoration:underline;transform:scaleX(0.965);transform-origin:0 0;">150084689744</div></div>
<div class="t" style="left:651px;top:823px;width:122px;height:15px;overflow:hidden"><div class="t" style="left:2.5px;top:4.48px;font-size:12px;color:#111;transform:scaleX(1.02);transform-origin:0 0;">20000000019330192</div></div>
<div class="t" style="left:774px;top:823px;width:35px;height:15px;overflow:hidden"><div class="t" style="left:2.5px;top:4.48px;font-size:12px;color:#111;transform:scaleX(0.96);transform-origin:0 0;">18.00</div></div>
<div class="t" style="left:810px;top:823px;width:136px;height:15px;overflow:hidden"><div class="t" style="left:2.5px;top:4.48px;font-size:12px;color:#111;">2024/09/03 12:43:39 PM</div></div>
<div class="t" style="left:947px;top:823px;width:136px;height:15px;overflow:hidden"><div class="t" style="left:2.5px;top:4.48px;font-size:12px;color:#111;transform:scaleX(1.006);transform-origin:0 0;">2024/09/03 3:25:14 PM</div></div>
<div class="t" style="left:1084px;top:823px;width:128px;height:15px;overflow:hidden"><div class="t" style="left:3.5px;top:4.48px;font-size:12px;color:#111;">2</div></div>
<div class="t" style="left:1213px;top:823px;width:96px;height:15px;overflow:hidden"><div class="t" style="left:2.5px;top:4.48px;font-size:12px;color:#111;transform:scaleX(0.92);transform-origin:0 0;">2.69</div></div>
<div class="a" style="left:228px;top:198px;width:89px;height:17px;box-shadow:inset 0 0 0 1px rgba(200,240,252,0.75)"></div>
<div class="a" style="left:319px;top:198px;width:121px;height:17px;box-shadow:inset 0 0 0 1px rgba(200,240,252,0.75)"></div>
<div class="a" style="left:442px;top:198px;width:90px;height:17px;box-shadow:inset 0 0 0 1px rgba(200,240,252,0.75)"></div>
<div class="a" style="left:535px;top:198px;width:114px;height:17px;box-shadow:inset 0 0 0 1px rgba(200,240,252,0.75)"></div>
<div class="a" style="left:652px;top:198px;width:120px;height:17px;box-shadow:inset 0 0 0 1px rgba(200,240,252,0.75)"></div>
<div class="a" style="left:775px;top:198px;width:33px;height:17px;box-shadow:inset 0 0 0 1px rgba(200,240,252,0.75)"></div>
<div class="a" style="left:811px;top:198px;width:134px;height:17px;box-shadow:inset 0 0 0 1px rgba(200,240,252,0.75)"></div>
<div class="a" style="left:948px;top:198px;width:134px;height:17px;box-shadow:inset 0 0 0 1px rgba(200,240,252,0.75)"></div>
<div class="a" style="left:1084px;top:198px;width:127px;height:17px;box-shadow:inset 0 0 0 1px rgba(200,240,252,0.75)"></div>
<div class="a" style="left:1213px;top:198px;width:95px;height:17px;box-shadow:inset 0 0 0 1px rgba(200,240,252,0.75)"></div>
<div class="a" style="left:1310px;top:198px;width:179px;height:17px;box-shadow:inset 0 0 0 1px rgba(200,240,252,0.75)"></div>
<div class="a" style="left:228px;top:236px;width:89px;height:17px;box-shadow:inset 0 0 0 1px rgba(200,240,252,0.75)"></div>
<div class="a" style="left:319px;top:236px;width:121px;height:17px;box-shadow:inset 0 0 0 1px rgba(200,240,252,0.75)"></div>
<div class="a" style="left:442px;top:236px;width:90px;height:17px;box-shadow:inset 0 0 0 1px rgba(200,240,252,0.75)"></div>
<div class="a" style="left:535px;top:236px;width:114px;height:17px;box-shadow:inset 0 0 0 1px rgba(200,240,252,0.75)"></div>
<div class="a" style="left:652px;top:236px;width:120px;height:17px;box-shadow:inset 0 0 0 1px rgba(200,240,252,0.75)"></div>
<div class="a" style="left:775px;top:236px;width:33px;height:17px;box-shadow:inset 0 0 0 1px rgba(200,240,252,0.75)"></div>
<div class="a" style="left:811px;top:236px;width:134px;height:17px;box-shadow:inset 0 0 0 1px rgba(200,240,252,0.75)"></div>
<div class="a" style="left:948px;top:236px;width:134px;height:17px;box-shadow:inset 0 0 0 1px rgba(200,240,252,0.75)"></div>
<div class="a" style="left:1084px;top:236px;width:127px;height:17px;box-shadow:inset 0 0 0 1px rgba(200,240,252,0.75)"></div>
<div class="a" style="left:1213px;top:236px;width:95px;height:17px;box-shadow:inset 0 0 0 1px rgba(200,240,252,0.75)"></div>
<div class="a" style="left:1310px;top:236px;width:179px;height:17px;box-shadow:inset 0 0 0 1px rgba(200,240,252,0.75)"></div>
<div class="a" style="left:228px;top:274px;width:89px;height:17px;box-shadow:inset 0 0 0 1px rgba(200,240,252,0.75)"></div>
<div class="a" style="left:319px;top:274px;width:121px;height:17px;box-shadow:inset 0 0 0 1px rgba(200,240,252,0.75)"></div>
<div class="a" style="left:442px;top:274px;width:90px;height:17px;box-shadow:inset 0 0 0 1px rgba(200,240,252,0.75)"></div>
<div class="a" style="left:535px;top:274px;width:114px;height:17px;box-shadow:inset 0 0 0 1px rgba(200,240,252,0.75)"></div>
<div class="a" style="left:652px;top:274px;width:120px;height:17px;box-shadow:inset 0 0 0 1px rgba(200,240,252,0.75)"></div>
<div class="a" style="left:775px;top:274px;width:33px;height:17px;box-shadow:inset 0 0 0 1px rgba(200,240,252,0.75)"></div>
<div class="a" style="left:811px;top:274px;width:134px;height:17px;box-shadow:inset 0 0 0 1px rgba(200,240,252,0.75)"></div>
<div class="a" style="left:948px;top:274px;width:134px;height:17px;box-shadow:inset 0 0 0 1px rgba(200,240,252,0.75)"></div>
<div class="a" style="left:1084px;top:274px;width:127px;height:17px;box-shadow:inset 0 0 0 1px rgba(200,240,252,0.75)"></div>
<div class="a" style="left:1213px;top:274px;width:95px;height:17px;box-shadow:inset 0 0 0 1px rgba(200,240,252,0.75)"></div>
<div class="a" style="left:1310px;top:274px;width:179px;height:17px;box-shadow:inset 0 0 0 1px rgba(200,240,252,0.75)"></div>
<div class="a" style="left:228px;top:312px;width:89px;height:17px;box-shadow:inset 0 0 0 1px rgba(200,240,252,0.75)"></div>
<div class="a" style="left:319px;top:312px;width:121px;height:17px;box-shadow:inset 0 0 0 1px rgba(200,240,252,0.75)"></div>
<div class="a" style="left:442px;top:312px;width:90px;height:17px;box-shadow:inset 0 0 0 1px rgba(200,240,252,0.75)"></div>
<div class="a" style="left:535px;top:312px;width:114px;height:17px;box-shadow:inset 0 0 0 1px rgba(200,240,252,0.75)"></div>
<div class="a" style="left:652px;top:312px;width:120px;height:17px;box-shadow:inset 0 0 0 1px rgba(200,240,252,0.75)"></div>
<div class="a" style="left:775px;top:312px;width:33px;height:17px;box-shadow:inset 0 0 0 1px rgba(200,240,252,0.75)"></div>
<div class="a" style="left:811px;top:312px;width:134px;height:17px;box-shadow:inset 0 0 0 1px rgba(200,240,252,0.75)"></div>
<div class="a" style="left:948px;top:312px;width:134px;height:17px;box-shadow:inset 0 0 0 1px rgba(200,240,252,0.75)"></div>
<div class="a" style="left:1084px;top:312px;width:127px;height:17px;box-shadow:inset 0 0 0 1px rgba(200,240,252,0.75)"></div>
<div class="a" style="left:1213px;top:312px;width:95px;height:17px;box-shadow:inset 0 0 0 1px rgba(200,240,252,0.75)"></div>
<div class="a" style="left:1310px;top:312px;width:179px;height:17px;box-shadow:inset 0 0 0 1px rgba(200,240,252,0.75)"></div>
<div class="a" style="left:228px;top:350px;width:89px;height:17px;box-shadow:inset 0 0 0 1px rgba(200,240,252,0.75)"></div>
<div class="a" style="left:319px;top:350px;width:121px;height:17px;box-shadow:inset 0 0 0 1px rgba(200,240,252,0.75)"></div>
<div class="a" style="left:442px;top:350px;width:90px;height:17px;box-shadow:inset 0 0 0 1px rgba(200,240,252,0.75)"></div>
<div class="a" style="left:535px;top:350px;width:114px;height:17px;box-shadow:inset 0 0 0 1px rgba(200,240,252,0.75)"></div>
<div class="a" style="left:652px;top:350px;width:120px;height:17px;box-shadow:inset 0 0 0 1px rgba(200,240,252,0.75)"></div>
<div class="a" style="left:775px;top:350px;width:33px;height:17px;box-shadow:inset 0 0 0 1px rgba(200,240,252,0.75)"></div>
<div class="a" style="left:811px;top:350px;width:134px;height:17px;box-shadow:inset 0 0 0 1px rgba(200,240,252,0.75)"></div>
<div class="a" style="left:948px;top:350px;width:134px;height:17px;box-shadow:inset 0 0 0 1px rgba(200,240,252,0.75)"></div>
<div class="a" style="left:1084px;top:350px;width:127px;height:17px;box-shadow:inset 0 0 0 1px rgba(200,240,252,0.75)"></div>
<div class="a" style="left:1213px;top:350px;width:95px;height:17px;box-shadow:inset 0 0 0 1px rgba(200,240,252,0.75)"></div>
<div class="a" style="left:1310px;top:350px;width:179px;height:17px;box-shadow:inset 0 0 0 1px rgba(200,240,252,0.75)"></div>
<div class="a" style="left:228px;top:388px;width:89px;height:17px;box-shadow:inset 0 0 0 1px rgba(200,240,252,0.75)"></div>
<div class="a" style="left:319px;top:388px;width:121px;height:17px;box-shadow:inset 0 0 0 1px rgba(200,240,252,0.75)"></div>
<div class="a" style="left:442px;top:388px;width:90px;height:17px;box-shadow:inset 0 0 0 1px rgba(200,240,252,0.75)"></div>
<div class="a" style="left:535px;top:388px;width:114px;height:17px;box-shadow:inset 0 0 0 1px rgba(200,240,252,0.75)"></div>
<div class="a" style="left:652px;top:388px;width:120px;height:17px;box-shadow:inset 0 0 0 1px rgba(200,240,252,0.75)"></div>
<div class="a" style="left:775px;top:388px;width:33px;height:17px;box-shadow:inset 0 0 0 1px rgba(200,240,252,0.75)"></div>
<div class="a" style="left:811px;top:388px;width:134px;height:17px;box-shadow:inset 0 0 0 1px rgba(200,240,252,0.75)"></div>
<div class="a" style="left:948px;top:388px;width:134px;height:17px;box-shadow:inset 0 0 0 1px rgba(200,240,252,0.75)"></div>
<div class="a" style="left:1084px;top:388px;width:127px;height:17px;box-shadow:inset 0 0 0 1px rgba(200,240,252,0.75)"></div>
<div class="a" style="left:1213px;top:388px;width:95px;height:17px;box-shadow:inset 0 0 0 1px rgba(200,240,252,0.75)"></div>
<div class="a" style="left:1310px;top:388px;width:179px;height:17px;box-shadow:inset 0 0 0 1px rgba(200,240,252,0.75)"></div>
<div class="a" style="left:228px;top:426px;width:89px;height:17px;box-shadow:inset 0 0 0 1px rgba(200,240,252,0.75)"></div>
<div class="a" style="left:319px;top:426px;width:121px;height:17px;box-shadow:inset 0 0 0 1px rgba(200,240,252,0.75)"></div>
<div class="a" style="left:442px;top:426px;width:90px;height:17px;box-shadow:inset 0 0 0 1px rgba(200,240,252,0.75)"></div>
<div class="a" style="left:535px;top:426px;width:114px;height:17px;box-shadow:inset 0 0 0 1px rgba(200,240,252,0.75)"></div>
<div class="a" style="left:652px;top:426px;width:120px;height:17px;box-shadow:inset 0 0 0 1px rgba(200,240,252,0.75)"></div>
<div class="a" style="left:775px;top:426px;width:33px;height:17px;box-shadow:inset 0 0 0 1px rgba(200,240,252,0.75)"></div>
<div class="a" style="left:811px;top:426px;width:134px;height:17px;box-shadow:inset 0 0 0 1px rgba(200,240,252,0.75)"></div>
<div class="a" style="left:948px;top:426px;width:134px;height:17px;box-shadow:inset 0 0 0 1px rgba(200,240,252,0.75)"></div>
<div class="a" style="left:1084px;top:426px;width:127px;height:17px;box-shadow:inset 0 0 0 1px rgba(200,240,252,0.75)"></div>
<div class="a" style="left:1213px;top:426px;width:95px;height:17px;box-shadow:inset 0 0 0 1px rgba(200,240,252,0.75)"></div>
<div class="a" style="left:1310px;top:426px;width:179px;height:17px;box-shadow:inset 0 0 0 1px rgba(200,240,252,0.75)"></div>
<div class="a" style="left:228px;top:464px;width:89px;height:17px;box-shadow:inset 0 0 0 1px rgba(200,240,252,0.75)"></div>
<div class="a" style="left:319px;top:464px;width:121px;height:17px;box-shadow:inset 0 0 0 1px rgba(200,240,252,0.75)"></div>
<div class="a" style="left:442px;top:464px;width:90px;height:17px;box-shadow:inset 0 0 0 1px rgba(200,240,252,0.75)"></div>
<div class="a" style="left:535px;top:464px;width:114px;height:17px;box-shadow:inset 0 0 0 1px rgba(200,240,252,0.75)"></div>
<div class="a" style="left:652px;top:464px;width:120px;height:17px;box-shadow:inset 0 0 0 1px rgba(200,240,252,0.75)"></div>
<div class="a" style="left:775px;top:464px;width:33px;height:17px;box-shadow:inset 0 0 0 1px rgba(200,240,252,0.75)"></div>
<div class="a" style="left:811px;top:464px;width:134px;height:17px;box-shadow:inset 0 0 0 1px rgba(200,240,252,0.75)"></div>
<div class="a" style="left:948px;top:464px;width:134px;height:17px;box-shadow:inset 0 0 0 1px rgba(200,240,252,0.75)"></div>
<div class="a" style="left:1084px;top:464px;width:127px;height:17px;box-shadow:inset 0 0 0 1px rgba(200,240,252,0.75)"></div>
<div class="a" style="left:1213px;top:464px;width:95px;height:17px;box-shadow:inset 0 0 0 1px rgba(200,240,252,0.75)"></div>
<div class="a" style="left:1310px;top:464px;width:179px;height:17px;box-shadow:inset 0 0 0 1px rgba(200,240,252,0.75)"></div>
<div class="a" style="left:228px;top:502px;width:89px;height:17px;box-shadow:inset 0 0 0 1px rgba(200,240,252,0.75)"></div>
<div class="a" style="left:319px;top:502px;width:121px;height:17px;box-shadow:inset 0 0 0 1px rgba(200,240,252,0.75)"></div>
<div class="a" style="left:442px;top:502px;width:90px;height:17px;box-shadow:inset 0 0 0 1px rgba(200,240,252,0.75)"></div>
<div class="a" style="left:535px;top:502px;width:114px;height:17px;box-shadow:inset 0 0 0 1px rgba(200,240,252,0.75)"></div>
<div class="a" style="left:652px;top:502px;width:120px;height:17px;box-shadow:inset 0 0 0 1px rgba(200,240,252,0.75)"></div>
<div class="a" style="left:775px;top:502px;width:33px;height:17px;box-shadow:inset 0 0 0 1px rgba(200,240,252,0.75)"></div>
<div class="a" style="left:811px;top:502px;width:134px;height:17px;box-shadow:inset 0 0 0 1px rgba(200,240,252,0.75)"></div>
<div class="a" style="left:948px;top:502px;width:134px;height:17px;box-shadow:inset 0 0 0 1px rgba(200,240,252,0.75)"></div>
<div class="a" style="left:1084px;top:502px;width:127px;height:17px;box-shadow:inset 0 0 0 1px rgba(200,240,252,0.75)"></div>
<div class="a" style="left:1213px;top:502px;width:95px;height:17px;box-shadow:inset 0 0 0 1px rgba(200,240,252,0.75)"></div>
<div class="a" style="left:1310px;top:502px;width:179px;height:17px;box-shadow:inset 0 0 0 1px rgba(200,240,252,0.75)"></div>
<div class="a" style="left:228px;top:540px;width:89px;height:16px;box-shadow:inset 0 0 0 1px rgba(200,240,252,0.75)"></div>
<div class="a" style="left:319px;top:540px;width:121px;height:16px;box-shadow:inset 0 0 0 1px rgba(200,240,252,0.75)"></div>
<div class="a" style="left:442px;top:540px;width:90px;height:16px;box-shadow:inset 0 0 0 1px rgba(200,240,252,0.75)"></div>
<div class="a" style="left:535px;top:540px;width:114px;height:16px;box-shadow:inset 0 0 0 1px rgba(200,240,252,0.75)"></div>
<div class="a" style="left:652px;top:540px;width:120px;height:16px;box-shadow:inset 0 0 0 1px rgba(200,240,252,0.75)"></div>
<div class="a" style="left:775px;top:540px;width:33px;height:16px;box-shadow:inset 0 0 0 1px rgba(200,240,252,0.75)"></div>
<div class="a" style="left:811px;top:540px;width:134px;height:16px;box-shadow:inset 0 0 0 1px rgba(200,240,252,0.75)"></div>
<div class="a" style="left:948px;top:540px;width:134px;height:16px;box-shadow:inset 0 0 0 1px rgba(200,240,252,0.75)"></div>
<div class="a" style="left:1084px;top:540px;width:127px;height:16px;box-shadow:inset 0 0 0 1px rgba(200,240,252,0.75)"></div>
<div class="a" style="left:1213px;top:540px;width:95px;height:16px;box-shadow:inset 0 0 0 1px rgba(200,240,252,0.75)"></div>
<div class="a" style="left:1310px;top:540px;width:179px;height:16px;box-shadow:inset 0 0 0 1px rgba(200,240,252,0.75)"></div>
<div class="a" style="left:228px;top:578px;width:89px;height:16px;box-shadow:inset 0 0 0 1px rgba(200,240,252,0.75)"></div>
<div class="a" style="left:319px;top:578px;width:121px;height:16px;box-shadow:inset 0 0 0 1px rgba(200,240,252,0.75)"></div>
<div class="a" style="left:442px;top:578px;width:90px;height:16px;box-shadow:inset 0 0 0 1px rgba(200,240,252,0.75)"></div>
<div class="a" style="left:535px;top:578px;width:114px;height:16px;box-shadow:inset 0 0 0 1px rgba(200,240,252,0.75)"></div>
<div class="a" style="left:652px;top:578px;width:120px;height:16px;box-shadow:inset 0 0 0 1px rgba(200,240,252,0.75)"></div>
<div class="a" style="left:775px;top:578px;width:33px;height:16px;box-shadow:inset 0 0 0 1px rgba(200,240,252,0.75)"></div>
<div class="a" style="left:811px;top:578px;width:134px;height:16px;box-shadow:inset 0 0 0 1px rgba(200,240,252,0.75)"></div>
<div class="a" style="left:948px;top:578px;width:134px;height:16px;box-shadow:inset 0 0 0 1px rgba(200,240,252,0.75)"></div>
<div class="a" style="left:1084px;top:578px;width:127px;height:16px;box-shadow:inset 0 0 0 1px rgba(200,240,252,0.75)"></div>
<div class="a" style="left:1213px;top:578px;width:95px;height:16px;box-shadow:inset 0 0 0 1px rgba(200,240,252,0.75)"></div>
<div class="a" style="left:1310px;top:578px;width:179px;height:16px;box-shadow:inset 0 0 0 1px rgba(200,240,252,0.75)"></div>
<div class="a" style="left:228px;top:615px;width:89px;height:17px;box-shadow:inset 0 0 0 1px rgba(200,240,252,0.75)"></div>
<div class="a" style="left:319px;top:615px;width:121px;height:17px;box-shadow:inset 0 0 0 1px rgba(200,240,252,0.75)"></div>
<div class="a" style="left:442px;top:615px;width:90px;height:17px;box-shadow:inset 0 0 0 1px rgba(200,240,252,0.75)"></div>
<div class="a" style="left:535px;top:615px;width:114px;height:17px;box-shadow:inset 0 0 0 1px rgba(200,240,252,0.75)"></div>
<div class="a" style="left:652px;top:615px;width:120px;height:17px;box-shadow:inset 0 0 0 1px rgba(200,240,252,0.75)"></div>
<div class="a" style="left:775px;top:615px;width:33px;height:17px;box-shadow:inset 0 0 0 1px rgba(200,240,252,0.75)"></div>
<div class="a" style="left:811px;top:615px;width:134px;height:17px;box-shadow:inset 0 0 0 1px rgba(200,240,252,0.75)"></div>
<div class="a" style="left:948px;top:615px;width:134px;height:17px;box-shadow:inset 0 0 0 1px rgba(200,240,252,0.75)"></div>
<div class="a" style="left:1084px;top:615px;width:127px;height:17px;box-shadow:inset 0 0 0 1px rgba(200,240,252,0.75)"></div>
<div class="a" style="left:1213px;top:615px;width:95px;height:17px;box-shadow:inset 0 0 0 1px rgba(200,240,252,0.75)"></div>
<div class="a" style="left:1310px;top:615px;width:179px;height:17px;box-shadow:inset 0 0 0 1px rgba(200,240,252,0.75)"></div>
<div class="a" style="left:228px;top:653px;width:89px;height:17px;box-shadow:inset 0 0 0 1px rgba(200,240,252,0.75)"></div>
<div class="a" style="left:319px;top:653px;width:121px;height:17px;box-shadow:inset 0 0 0 1px rgba(200,240,252,0.75)"></div>
<div class="a" style="left:442px;top:653px;width:90px;height:17px;box-shadow:inset 0 0 0 1px rgba(200,240,252,0.75)"></div>
<div class="a" style="left:535px;top:653px;width:114px;height:17px;box-shadow:inset 0 0 0 1px rgba(200,240,252,0.75)"></div>
<div class="a" style="left:652px;top:653px;width:120px;height:17px;box-shadow:inset 0 0 0 1px rgba(200,240,252,0.75)"></div>
<div class="a" style="left:775px;top:653px;width:33px;height:17px;box-shadow:inset 0 0 0 1px rgba(200,240,252,0.75)"></div>
<div class="a" style="left:811px;top:653px;width:134px;height:17px;box-shadow:inset 0 0 0 1px rgba(200,240,252,0.75)"></div>
<div class="a" style="left:948px;top:653px;width:134px;height:17px;box-shadow:inset 0 0 0 1px rgba(200,240,252,0.75)"></div>
<div class="a" style="left:1084px;top:653px;width:127px;height:17px;box-shadow:inset 0 0 0 1px rgba(200,240,252,0.75)"></div>
<div class="a" style="left:1213px;top:653px;width:95px;height:17px;box-shadow:inset 0 0 0 1px rgba(200,240,252,0.75)"></div>
<div class="a" style="left:1310px;top:653px;width:179px;height:17px;box-shadow:inset 0 0 0 1px rgba(200,240,252,0.75)"></div>
<div class="a" style="left:228px;top:691px;width:89px;height:17px;box-shadow:inset 0 0 0 1px rgba(200,240,252,0.75)"></div>
<div class="a" style="left:319px;top:691px;width:121px;height:17px;box-shadow:inset 0 0 0 1px rgba(200,240,252,0.75)"></div>
<div class="a" style="left:442px;top:691px;width:90px;height:17px;box-shadow:inset 0 0 0 1px rgba(200,240,252,0.75)"></div>
<div class="a" style="left:535px;top:691px;width:114px;height:17px;box-shadow:inset 0 0 0 1px rgba(200,240,252,0.75)"></div>
<div class="a" style="left:652px;top:691px;width:120px;height:17px;box-shadow:inset 0 0 0 1px rgba(200,240,252,0.75)"></div>
<div class="a" style="left:775px;top:691px;width:33px;height:17px;box-shadow:inset 0 0 0 1px rgba(200,240,252,0.75)"></div>
<div class="a" style="left:811px;top:691px;width:134px;height:17px;box-shadow:inset 0 0 0 1px rgba(200,240,252,0.75)"></div>
<div class="a" style="left:948px;top:691px;width:134px;height:17px;box-shadow:inset 0 0 0 1px rgba(200,240,252,0.75)"></div>
<div class="a" style="left:1084px;top:691px;width:127px;height:17px;box-shadow:inset 0 0 0 1px rgba(200,240,252,0.75)"></div>
<div class="a" style="left:1213px;top:691px;width:95px;height:17px;box-shadow:inset 0 0 0 1px rgba(200,240,252,0.75)"></div>
<div class="a" style="left:1310px;top:691px;width:179px;height:17px;box-shadow:inset 0 0 0 1px rgba(200,240,252,0.75)"></div>
<div class="a" style="left:228px;top:729px;width:89px;height:17px;box-shadow:inset 0 0 0 1px rgba(200,240,252,0.75)"></div>
<div class="a" style="left:319px;top:729px;width:121px;height:17px;box-shadow:inset 0 0 0 1px rgba(200,240,252,0.75)"></div>
<div class="a" style="left:442px;top:729px;width:90px;height:17px;box-shadow:inset 0 0 0 1px rgba(200,240,252,0.75)"></div>
<div class="a" style="left:535px;top:729px;width:114px;height:17px;box-shadow:inset 0 0 0 1px rgba(200,240,252,0.75)"></div>
<div class="a" style="left:652px;top:729px;width:120px;height:17px;box-shadow:inset 0 0 0 1px rgba(200,240,252,0.75)"></div>
<div class="a" style="left:775px;top:729px;width:33px;height:17px;box-shadow:inset 0 0 0 1px rgba(200,240,252,0.75)"></div>
<div class="a" style="left:811px;top:729px;width:134px;height:17px;box-shadow:inset 0 0 0 1px rgba(200,240,252,0.75)"></div>
<div class="a" style="left:948px;top:729px;width:134px;height:17px;box-shadow:inset 0 0 0 1px rgba(200,240,252,0.75)"></div>
<div class="a" style="left:1084px;top:729px;width:127px;height:17px;box-shadow:inset 0 0 0 1px rgba(200,240,252,0.75)"></div>
<div class="a" style="left:1213px;top:729px;width:95px;height:17px;box-shadow:inset 0 0 0 1px rgba(200,240,252,0.75)"></div>
<div class="a" style="left:1310px;top:729px;width:179px;height:17px;box-shadow:inset 0 0 0 1px rgba(200,240,252,0.75)"></div>
<div class="a" style="left:228px;top:767px;width:89px;height:17px;box-shadow:inset 0 0 0 1px rgba(200,240,252,0.75)"></div>
<div class="a" style="left:319px;top:767px;width:121px;height:17px;box-shadow:inset 0 0 0 1px rgba(200,240,252,0.75)"></div>
<div class="a" style="left:442px;top:767px;width:90px;height:17px;box-shadow:inset 0 0 0 1px rgba(200,240,252,0.75)"></div>
<div class="a" style="left:535px;top:767px;width:114px;height:17px;box-shadow:inset 0 0 0 1px rgba(200,240,252,0.75)"></div>
<div class="a" style="left:652px;top:767px;width:120px;height:17px;box-shadow:inset 0 0 0 1px rgba(200,240,252,0.75)"></div>
<div class="a" style="left:775px;top:767px;width:33px;height:17px;box-shadow:inset 0 0 0 1px rgba(200,240,252,0.75)"></div>
<div class="a" style="left:811px;top:767px;width:134px;height:17px;box-shadow:inset 0 0 0 1px rgba(200,240,252,0.75)"></div>
<div class="a" style="left:948px;top:767px;width:134px;height:17px;box-shadow:inset 0 0 0 1px rgba(200,240,252,0.75)"></div>
<div class="a" style="left:1084px;top:767px;width:127px;height:17px;box-shadow:inset 0 0 0 1px rgba(200,240,252,0.75)"></div>
<div class="a" style="left:1213px;top:767px;width:95px;height:17px;box-shadow:inset 0 0 0 1px rgba(200,240,252,0.75)"></div>
<div class="a" style="left:1310px;top:767px;width:179px;height:17px;box-shadow:inset 0 0 0 1px rgba(200,240,252,0.75)"></div>
<div class="a" style="left:228px;top:805px;width:89px;height:17px;box-shadow:inset 0 0 0 1px rgba(200,240,252,0.75)"></div>
<div class="a" style="left:319px;top:805px;width:121px;height:17px;box-shadow:inset 0 0 0 1px rgba(200,240,252,0.75)"></div>
<div class="a" style="left:442px;top:805px;width:90px;height:17px;box-shadow:inset 0 0 0 1px rgba(200,240,252,0.75)"></div>
<div class="a" style="left:535px;top:805px;width:114px;height:17px;box-shadow:inset 0 0 0 1px rgba(200,240,252,0.75)"></div>
<div class="a" style="left:652px;top:805px;width:120px;height:17px;box-shadow:inset 0 0 0 1px rgba(200,240,252,0.75)"></div>
<div class="a" style="left:775px;top:805px;width:33px;height:17px;box-shadow:inset 0 0 0 1px rgba(200,240,252,0.75)"></div>
<div class="a" style="left:811px;top:805px;width:134px;height:17px;box-shadow:inset 0 0 0 1px rgba(200,240,252,0.75)"></div>
<div class="a" style="left:948px;top:805px;width:134px;height:17px;box-shadow:inset 0 0 0 1px rgba(200,240,252,0.75)"></div>
<div class="a" style="left:1084px;top:805px;width:127px;height:17px;box-shadow:inset 0 0 0 1px rgba(200,240,252,0.75)"></div>
<div class="a" style="left:1213px;top:805px;width:95px;height:17px;box-shadow:inset 0 0 0 1px rgba(200,240,252,0.75)"></div>
<div class="a" style="left:1310px;top:805px;width:179px;height:17px;box-shadow:inset 0 0 0 1px rgba(200,240,252,0.75)"></div>
<div class="a" style="left:228px;top:179px;width:89px;height:1px;background:#3a80c8"></div>
<div class="a" style="left:228px;top:179px;width:1px;height:17px;background:#3a80c8"></div>
<div class="a" style="left:318px;top:179px;width:122px;height:1px;background:#3a80c8"></div>
<div class="a" style="left:318px;top:179px;width:1px;height:17px;background:#3a80c8"></div>
<div class="a" style="left:441px;top:179px;width:92px;height:1px;background:#3a80c8"></div>
<div class="a" style="left:441px;top:179px;width:1px;height:17px;background:#3a80c8"></div>
<div class="a" style="left:534px;top:179px;width:116px;height:1px;background:#3a80c8"></div>
<div class="a" style="left:534px;top:179px;width:1px;height:17px;background:#3a80c8"></div>
<div class="a" style="left:651px;top:179px;width:122px;height:1px;background:#3a80c8"></div>
<div class="a" style="left:651px;top:179px;width:1px;height:17px;background:#3a80c8"></div>
<div class="a" style="left:774px;top:179px;width:35px;height:1px;background:#3a80c8"></div>
<div class="a" style="left:774px;top:179px;width:1px;height:17px;background:#3a80c8"></div>
<div class="a" style="left:810px;top:179px;width:136px;height:1px;background:#3a80c8"></div>
<div class="a" style="left:810px;top:179px;width:1px;height:17px;background:#3a80c8"></div>
<div class="a" style="left:947px;top:179px;width:136px;height:1px;background:#3a80c8"></div>
<div class="a" style="left:947px;top:179px;width:1px;height:17px;background:#3a80c8"></div>
<div class="a" style="left:1084px;top:179px;width:128px;height:1px;background:#3a80c8"></div>
<div class="a" style="left:1084px;top:179px;width:1px;height:17px;background:#3a80c8"></div>
<div class="a" style="left:1213px;top:179px;width:96px;height:1px;background:#3a80c8"></div>
<div class="a" style="left:1213px;top:179px;width:1px;height:17px;background:#3a80c8"></div>
<div class="a" style="left:228px;top:196px;width:1082px;height:1px;background:rgba(0,22,70,0.50)"></div>
<div class="a" style="left:228px;top:197px;width:1082px;height:1px;background:rgba(0,22,70,1.00)"></div>
<div class="a" style="left:228px;top:198px;width:1082px;height:1px;background:rgba(0,22,70,0.10)"></div>
<div class="a" style="left:1310px;top:196px;width:177px;height:1px;background:rgba(0,0,0,0.32)"></div>
<div class="a" style="left:1310px;top:197px;width:177px;height:1px;background:rgba(0,0,0,0.87)"></div>
<div class="a" style="left:228px;top:215px;width:1259px;height:1px;background:rgba(0,0,0,0.36)"></div>
<div class="a" style="left:228px;top:216px;width:1259px;height:1px;background:rgba(0,0,0,0.84)"></div>
<div class="a" style="left:228px;top:234px;width:1259px;height:1px;background:rgba(0,0,0,0.40)"></div>
<div class="a" style="left:228px;top:235px;width:1259px;height:1px;background:rgba(0,0,0,0.80)"></div>
<div class="a" style="left:228px;top:253px;width:1259px;height:1px;background:rgba(0,0,0,0.43)"></div>
<div class="a" style="left:228px;top:254px;width:1259px;height:1px;background:rgba(0,0,0,0.76)"></div>
<div class="a" style="left:228px;top:272px;width:1259px;height:1px;background:rgba(0,0,0,0.47)"></div>
<div class="a" style="left:228px;top:273px;width:1259px;height:1px;background:rgba(0,0,0,0.73)"></div>
<div class="a" style="left:228px;top:291px;width:1259px;height:1px;background:rgba(0,0,0,0.51)"></div>
<div class="a" style="left:228px;top:292px;width:1259px;height:1px;background:rgba(0,0,0,0.69)"></div>
<div class="a" style="left:228px;top:310px;width:1259px;height:1px;background:rgba(0,0,0,0.54)"></div>
<div class="a" style="left:228px;top:311px;width:1259px;height:1px;background:rgba(0,0,0,0.65)"></div>
<div class="a" style="left:228px;top:329px;width:1259px;height:1px;background:rgba(0,0,0,0.58)"></div>
<div class="a" style="left:228px;top:330px;width:1259px;height:1px;background:rgba(0,0,0,0.62)"></div>
<div class="a" style="left:228px;top:348px;width:1259px;height:1px;background:rgba(0,0,0,0.62)"></div>
<div class="a" style="left:228px;top:349px;width:1259px;height:1px;background:rgba(0,0,0,0.58)"></div>
<div class="a" style="left:228px;top:367px;width:1259px;height:1px;background:rgba(0,0,0,0.65)"></div>
<div class="a" style="left:228px;top:368px;width:1259px;height:1px;background:rgba(0,0,0,0.54)"></div>
<div class="a" style="left:228px;top:386px;width:1259px;height:1px;background:rgba(0,0,0,0.69)"></div>
<div class="a" style="left:228px;top:387px;width:1259px;height:1px;background:rgba(0,0,0,0.51)"></div>
<div class="a" style="left:228px;top:405px;width:1259px;height:1px;background:rgba(0,0,0,0.73)"></div>
<div class="a" style="left:228px;top:406px;width:1259px;height:1px;background:rgba(0,0,0,0.47)"></div>
<div class="a" style="left:228px;top:424px;width:1259px;height:1px;background:rgba(0,0,0,0.76)"></div>
<div class="a" style="left:228px;top:425px;width:1259px;height:1px;background:rgba(0,0,0,0.43)"></div>
<div class="a" style="left:228px;top:443px;width:1259px;height:1px;background:rgba(0,0,0,0.80)"></div>
<div class="a" style="left:228px;top:444px;width:1259px;height:1px;background:rgba(0,0,0,0.40)"></div>
<div class="a" style="left:228px;top:462px;width:1259px;height:1px;background:rgba(0,0,0,0.84)"></div>
<div class="a" style="left:228px;top:463px;width:1259px;height:1px;background:rgba(0,0,0,0.36)"></div>
<div class="a" style="left:228px;top:481px;width:1259px;height:1px;background:rgba(0,0,0,0.87)"></div>
<div class="a" style="left:228px;top:482px;width:1259px;height:1px;background:rgba(0,0,0,0.32)"></div>
<div class="a" style="left:228px;top:500px;width:1259px;height:1px;background:rgba(0,0,0,0.91)"></div>
<div class="a" style="left:228px;top:501px;width:1259px;height:1px;background:rgba(0,0,0,0.29)"></div>
<div class="a" style="left:228px;top:519px;width:1259px;height:1px;background:rgba(0,0,0,0.92)"></div>
<div class="a" style="left:228px;top:520px;width:1259px;height:1px;background:rgba(0,0,0,0.25)"></div>
<div class="a" style="left:228px;top:538px;width:1259px;height:1px;background:rgba(0,0,0,0.92)"></div>
<div class="a" style="left:228px;top:539px;width:1259px;height:1px;background:rgba(0,0,0,0.21)"></div>
<div class="a" style="left:228px;top:556px;width:1259px;height:1px;background:rgba(0,0,0,0.10)"></div>
<div class="a" style="left:228px;top:557px;width:1259px;height:1px;background:rgba(0,0,0,0.92)"></div>
<div class="a" style="left:228px;top:558px;width:1259px;height:1px;background:rgba(0,0,0,0.17)"></div>
<div class="a" style="left:228px;top:575px;width:1259px;height:1px;background:rgba(0,0,0,0.14)"></div>
<div class="a" style="left:228px;top:576px;width:1259px;height:1px;background:rgba(0,0,0,0.92)"></div>
<div class="a" style="left:228px;top:577px;width:1259px;height:1px;background:rgba(0,0,0,0.14)"></div>
<div class="a" style="left:228px;top:594px;width:1259px;height:1px;background:rgba(0,0,0,0.17)"></div>
<div class="a" style="left:228px;top:595px;width:1259px;height:1px;background:rgba(0,0,0,0.92)"></div>
<div class="a" style="left:228px;top:596px;width:1259px;height:1px;background:rgba(0,0,0,0.10)"></div>
<div class="a" style="left:228px;top:613px;width:1259px;height:1px;background:rgba(0,0,0,0.21)"></div>
<div class="a" style="left:228px;top:614px;width:1259px;height:1px;background:rgba(0,0,0,0.92)"></div>
<div class="a" style="left:228px;top:632px;width:1259px;height:1px;background:rgba(0,0,0,0.25)"></div>
<div class="a" style="left:228px;top:633px;width:1259px;height:1px;background:rgba(0,0,0,0.92)"></div>
<div class="a" style="left:228px;top:651px;width:1259px;height:1px;background:rgba(0,0,0,0.29)"></div>
<div class="a" style="left:228px;top:652px;width:1259px;height:1px;background:rgba(0,0,0,0.91)"></div>
<div class="a" style="left:228px;top:670px;width:1259px;height:1px;background:rgba(0,0,0,0.32)"></div>
<div class="a" style="left:228px;top:671px;width:1259px;height:1px;background:rgba(0,0,0,0.87)"></div>
<div class="a" style="left:228px;top:689px;width:1259px;height:1px;background:rgba(0,0,0,0.36)"></div>
<div class="a" style="left:228px;top:690px;width:1259px;height:1px;background:rgba(0,0,0,0.84)"></div>
<div class="a" style="left:228px;top:708px;width:1259px;height:1px;background:rgba(0,0,0,0.40)"></div>
<div class="a" style="left:228px;top:709px;width:1259px;height:1px;background:rgba(0,0,0,0.80)"></div>
<div class="a" style="left:228px;top:727px;width:1259px;height:1px;background:rgba(0,0,0,0.43)"></div>
<div class="a" style="left:228px;top:728px;width:1259px;height:1px;background:rgba(0,0,0,0.76)"></div>
<div class="a" style="left:228px;top:746px;width:1259px;height:1px;background:rgba(0,0,0,0.47)"></div>
<div class="a" style="left:228px;top:747px;width:1259px;height:1px;background:rgba(0,0,0,0.73)"></div>
<div class="a" style="left:228px;top:765px;width:1259px;height:1px;background:rgba(0,0,0,0.51)"></div>
<div class="a" style="left:228px;top:766px;width:1259px;height:1px;background:rgba(0,0,0,0.69)"></div>
<div class="a" style="left:228px;top:784px;width:1259px;height:1px;background:rgba(0,0,0,0.54)"></div>
<div class="a" style="left:228px;top:785px;width:1259px;height:1px;background:rgba(0,0,0,0.65)"></div>
<div class="a" style="left:228px;top:803px;width:1259px;height:1px;background:rgba(0,0,0,0.58)"></div>
<div class="a" style="left:228px;top:804px;width:1259px;height:1px;background:rgba(0,0,0,0.62)"></div>
<div class="a" style="left:228px;top:822px;width:1259px;height:1px;background:rgba(0,0,0,0.62)"></div>
<div class="a" style="left:228px;top:823px;width:1259px;height:1px;background:rgba(0,0,0,0.58)"></div>
<div class="a" style="left:226px;top:178px;width:1px;height:660px;background:rgba(70,70,70,0.20)"></div>
<div class="a" style="left:227px;top:178px;width:1px;height:660px;background:rgba(70,70,70,0.80)"></div>
<div class="a" style="left:317px;top:198px;width:1px;height:640px;background:rgba(0,0,0,0.87)"></div>
<div class="a" style="left:318px;top:198px;width:1px;height:640px;background:rgba(0,0,0,0.41)"></div>
<div class="a" style="left:317px;top:179px;width:1px;height:19px;background:rgba(0,22,70,1.00)"></div>
<div class="a" style="left:318px;top:179px;width:1px;height:19px;background:rgba(0,22,70,0.55)"></div>
<div class="a" style="left:440px;top:198px;width:1px;height:640px;background:rgba(0,0,0,0.92)"></div>
<div class="a" style="left:441px;top:198px;width:1px;height:640px;background:rgba(0,0,0,0.32)"></div>
<div class="a" style="left:439px;top:179px;width:1px;height:19px;background:rgba(0,22,70,0.15)"></div>
<div class="a" style="left:440px;top:179px;width:1px;height:19px;background:rgba(0,22,70,1.00)"></div>
<div class="a" style="left:441px;top:179px;width:1px;height:19px;background:rgba(0,22,70,0.45)"></div>
<div class="a" style="left:532px;top:198px;width:1px;height:640px;background:rgba(0,0,0,0.18)"></div>
<div class="a" style="left:533px;top:198px;width:1px;height:640px;background:rgba(0,0,0,0.92)"></div>
<div class="a" style="left:534px;top:198px;width:1px;height:640px;background:rgba(0,0,0,0.18)"></div>
<div class="a" style="left:532px;top:179px;width:1px;height:19px;background:rgba(0,22,70,0.30)"></div>
<div class="a" style="left:533px;top:179px;width:1px;height:19px;background:rgba(0,22,70,1.00)"></div>
<div class="a" style="left:534px;top:179px;width:1px;height:19px;background:rgba(0,22,70,0.30)"></div>
<div class="a" style="left:649px;top:198px;width:1px;height:640px;background:rgba(0,0,0,0.18)"></div>
<div class="a" style="left:650px;top:198px;width:1px;height:640px;background:rgba(0,0,0,0.92)"></div>
<div class="a" style="left:651px;top:198px;width:1px;height:640px;background:rgba(0,0,0,0.18)"></div>
<div class="a" style="left:649px;top:179px;width:1px;height:19px;background:rgba(0,22,70,0.30)"></div>
<div class="a" style="left:650px;top:179px;width:1px;height:19px;background:rgba(0,22,70,1.00)"></div>
<div class="a" style="left:651px;top:179px;width:1px;height:19px;background:rgba(0,22,70,0.30)"></div>
<div class="a" style="left:772px;top:198px;width:1px;height:640px;background:rgba(0,0,0,0.28)"></div>
<div class="a" style="left:773px;top:198px;width:1px;height:640px;background:rgba(0,0,0,0.92)"></div>
<div class="a" style="left:774px;top:198px;width:1px;height:640px;background:rgba(0,0,0,0.09)"></div>
<div class="a" style="left:772px;top:179px;width:1px;height:19px;background:rgba(0,22,70,0.40)"></div>
<div class="a" style="left:773px;top:179px;width:1px;height:19px;background:rgba(0,22,70,1.00)"></div>
<div class="a" style="left:774px;top:179px;width:1px;height:19px;background:rgba(0,22,70,0.20)"></div>
<div class="a" style="left:808px;top:198px;width:1px;height:640px;background:rgba(0,0,0,0.18)"></div>
<div class="a" style="left:809px;top:198px;width:1px;height:640px;background:rgba(0,0,0,0.92)"></div>
<div class="a" style="left:810px;top:198px;width:1px;height:640px;background:rgba(0,0,0,0.18)"></div>
<div class="a" style="left:808px;top:179px;width:1px;height:19px;background:rgba(0,22,70,0.30)"></div>
<div class="a" style="left:809px;top:179px;width:1px;height:19px;background:rgba(0,22,70,1.00)"></div>
<div class="a" style="left:810px;top:179px;width:1px;height:19px;background:rgba(0,22,70,0.30)"></div>
<div class="a" style="left:945px;top:198px;width:1px;height:640px;background:rgba(0,0,0,0.28)"></div>
<div class="a" style="left:946px;top:198px;width:1px;height:640px;background:rgba(0,0,0,0.92)"></div>
<div class="a" style="left:947px;top:198px;width:1px;height:640px;background:rgba(0,0,0,0.09)"></div>
<div class="a" style="left:945px;top:179px;width:1px;height:19px;background:rgba(0,22,70,0.40)"></div>
<div class="a" style="left:946px;top:179px;width:1px;height:19px;background:rgba(0,22,70,1.00)"></div>
<div class="a" style="left:947px;top:179px;width:1px;height:19px;background:rgba(0,22,70,0.20)"></div>
<div class="a" style="left:1082px;top:198px;width:1px;height:640px;background:rgba(0,0,0,0.37)"></div>
<div class="a" style="left:1083px;top:198px;width:1px;height:640px;background:rgba(0,0,0,0.92)"></div>
<div class="a" style="left:1082px;top:179px;width:1px;height:19px;background:rgba(0,22,70,0.50)"></div>
<div class="a" style="left:1083px;top:179px;width:1px;height:19px;background:rgba(0,22,70,1.00)"></div>
<div class="a" style="left:1084px;top:179px;width:1px;height:19px;background:rgba(0,22,70,0.10)"></div>
<div class="a" style="left:1211px;top:198px;width:1px;height:640px;background:rgba(0,0,0,0.55)"></div>
<div class="a" style="left:1212px;top:198px;width:1px;height:640px;background:rgba(0,0,0,0.74)"></div>
<div class="a" style="left:1211px;top:179px;width:1px;height:19px;background:rgba(0,22,70,0.70)"></div>
<div class="a" style="left:1212px;top:179px;width:1px;height:19px;background:rgba(0,22,70,0.90)"></div>
<div class="a" style="left:1308px;top:198px;width:1px;height:640px;background:rgba(0,0,0,0.46)"></div>
<div class="a" style="left:1309px;top:198px;width:1px;height:640px;background:rgba(0,0,0,0.83)"></div>
<div class="a" style="left:1308px;top:179px;width:1px;height:19px;background:rgba(0,22,70,0.60)"></div>
<div class="a" style="left:1309px;top:179px;width:1px;height:19px;background:rgba(0,22,70,1.00)"></div>
<div class="a" style="left:1487px;top:179px;width:15px;height:658px;background:#f0f0f0"></div>
<div class="a" style="left:1487px;top:196px;width:15px;height:8px;background:#cdcdcd"></div>
<svg class="a" style="left:1490px;top:184px" width="10" height="8" viewBox="0 0 10 8" fill="none" stroke="#a0a0a0" stroke-width="1.3"><path d="M1 6 L5 2 L9 6"/></svg>
<svg class="a" style="left:1490px;top:826px" width="10" height="8" viewBox="0 0 10 8" fill="none" stroke="#a0a0a0" stroke-width="1.3"><path d="M1 2 L5 6 L9 2"/></svg>
</body></html>
